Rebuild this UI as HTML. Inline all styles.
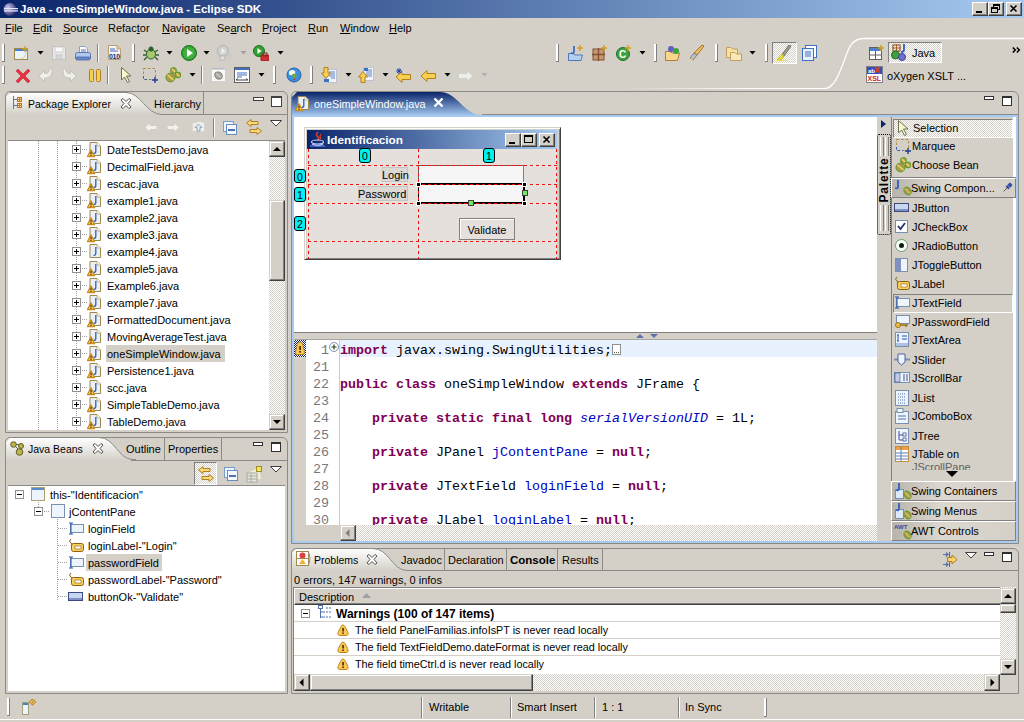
<!DOCTYPE html>
<html><head><meta charset="utf-8"><style>
html,body{margin:0;padding:0;}
body{width:1024px;height:722px;overflow:hidden;position:relative;background:#d4d0c8;font-family:"Liberation Sans",sans-serif;font-size:11px;color:#000;}
.a{position:absolute;}
.t{position:absolute;white-space:pre;}
u{text-decoration:underline;text-underline-offset:1px;}
</style></head><body>
<div class="a" style="left:0px;top:0px;width:1024px;height:18px;background:linear-gradient(to right,#0a246a,#a6caf0)"></div><svg class="a" style="left:2px;top:2px;" width="16" height="15" viewBox="0 0 16 15"><defs><radialGradient id="eg" cx="0.35" cy="0.35" r="0.7"><stop offset="0" stop-color="#c8c8f0"/><stop offset="1" stop-color="#2c2a6a"/></radialGradient></defs><circle cx="8" cy="7.5" r="6.5" fill="url(#eg)"/><rect x="2" y="6" width="14" height="1.2" fill="#e8e8ff"/><rect x="2" y="8.3" width="14" height="1.2" fill="#e8e8ff"/></svg><div class="t" style="left:20px;top:2px;line-height:14px;color:#fff;font-weight:bold;font-size:11.5px;">Java - oneSimpleWindow.java - Eclipse SDK</div><div class="a" style="left:972px;top:2px;width:16px;height:14px;background:#d4d0c8;border-top:1px solid #fff;border-left:1px solid #fff;border-right:1px solid #404040;border-bottom:1px solid #404040;box-sizing:border-box;box-shadow:inset -1px -1px 0 #808080"></div><svg class="a" style="left:972px;top:2px;" width="16" height="14" viewBox="0 0 16 14"><rect x="4" y="9" width="6" height="2" fill="#000"/></svg><div class="a" style="left:988px;top:2px;width:16px;height:14px;background:#d4d0c8;border-top:1px solid #fff;border-left:1px solid #fff;border-right:1px solid #404040;border-bottom:1px solid #404040;box-sizing:border-box;box-shadow:inset -1px -1px 0 #808080"></div><svg class="a" style="left:988px;top:2px;" width="16" height="14" viewBox="0 0 16 14"><rect x="5.5" y="2.5" width="6" height="5" fill="none" stroke="#000"/><rect x="5" y="2" width="7" height="2" fill="#000"/><rect x="3.5" y="5.5" width="6" height="5" fill="#d4d0c8" stroke="#000"/><rect x="3" y="5" width="7" height="2" fill="#000"/></svg><div class="a" style="left:1006px;top:2px;width:16px;height:14px;background:#d4d0c8;border-top:1px solid #fff;border-left:1px solid #fff;border-right:1px solid #404040;border-bottom:1px solid #404040;box-sizing:border-box;box-shadow:inset -1px -1px 0 #808080"></div><svg class="a" style="left:1006px;top:2px;" width="16" height="14" viewBox="0 0 16 14"><path d="M4.5 3.5 L10.5 9.5 M10.5 3.5 L4.5 9.5" stroke="#000" stroke-width="1.6"/></svg><div class="t" style="left:5px;top:22px;line-height:13px;font-size:11px"><u>F</u>ile</div><div class="t" style="left:33px;top:22px;line-height:13px;font-size:11px"><u>E</u>dit</div><div class="t" style="left:63px;top:22px;line-height:13px;font-size:11px"><u>S</u>ource</div><div class="t" style="left:108px;top:22px;line-height:13px;font-size:11px">Refac<u>t</u>or</div><div class="t" style="left:162px;top:22px;line-height:13px;font-size:11px"><u>N</u>avigate</div><div class="t" style="left:217px;top:22px;line-height:13px;font-size:11px">Se<u>a</u>rch</div><div class="t" style="left:262px;top:22px;line-height:13px;font-size:11px"><u>P</u>roject</div><div class="t" style="left:308px;top:22px;line-height:13px;font-size:11px"><u>R</u>un</div><div class="t" style="left:340px;top:22px;line-height:13px;font-size:11px"><u>W</u>indow</div><div class="t" style="left:389px;top:22px;line-height:13px;font-size:11px"><u>H</u>elp</div><div class="a" style="left:2px;top:44px;width:3px;height:18px;background:#fff;border-right:1px solid #808080;border-bottom:1px solid #808080;box-sizing:border-box;"></div><div class="a" style="left:2px;top:66px;width:3px;height:18px;background:#fff;border-right:1px solid #808080;border-bottom:1px solid #808080;box-sizing:border-box;"></div><svg class="a" style="left:14px;top:46px;" width="15" height="15" viewBox="0 0 15 15"><rect x="0.5" y="2.5" width="13" height="11" fill="#eaf2fb" stroke="#a08848"/><rect x="1" y="3" width="12" height="2" fill="#4a7fd0"/><path d="M11 0 V6 M8 3 H14" stroke="#d0a020" stroke-width="1.5"/><path d="M12 6 Q12 12 6 13" stroke="#f0d060" fill="none"/></svg><svg class="a" style="left:37px;top:51px;" width="7" height="4" viewBox="0 0 7 4"><path d="M0.5 0 H6.5 L3.5 3.5 Z" fill="#000"/></svg><svg class="a" style="left:52px;top:46px;" width="15" height="15" viewBox="0 0 15 15"><rect x="0.5" y="0.5" width="13" height="13" fill="#e8e8e8" stroke="#c0c0c0"/><rect x="3" y="1" width="8" height="5" fill="#fafafa" stroke="#d0d0d0"/><rect x="4" y="9" width="6" height="4" fill="#d8d8d8" stroke="#c8c8c8"/></svg><svg class="a" style="left:75px;top:46px;" width="16" height="15" viewBox="0 0 16 15"><path d="M4.5 0.5 H10 L12.5 3 V8.5 H4.5 Z" fill="#fff" stroke="#8aa0c8"/><path d="M6 4 H11 M6 6 H11" stroke="#5070b0"/><path d="M0.5 8.5 Q0.5 6.5 2.5 6.5 H13.5 Q15.5 6.5 15.5 8.5 V12.5 H0.5 Z" fill="#b0c8ec" stroke="#5a78b8"/><rect x="1" y="11" width="14" height="3" rx="1" fill="#6a88c8" stroke="#4a68a8" stroke-width="0.8"/></svg><div class="a" style="left:97px;top:44px;width:2px;height:18px;border-left:1px solid #808080;border-right:1px solid #fff;box-sizing:border-box;"></div><svg class="a" style="left:108px;top:45px;" width="15" height="16" viewBox="0 0 15 16"><path d="M0.5 0.5 H9 L12.5 4 V14.5 H0.5 Z" fill="#f2f4f8" stroke="#b8a070"/><path d="M9 0.5 V4 H12.5" fill="#f0c080" stroke="#c0a070"/><path d="M2 4 H7 M2 6 H10" stroke="#4a68b8"/><text x="1" y="13.5" font-family="Liberation Sans" font-size="7" font-weight="bold" fill="#102a6a" letter-spacing="-0.3">010</text></svg><div class="a" style="left:132px;top:44px;width:3px;height:18px;background:#fff;border-right:1px solid #808080;border-bottom:1px solid #808080;box-sizing:border-box;"></div><svg class="a" style="left:143px;top:45px;" width="16" height="16" viewBox="0 0 16 16"><ellipse cx="8" cy="9" rx="4.5" ry="5" fill="#a8c870" stroke="#306030"/><circle cx="8" cy="4" r="2.5" fill="#306030"/><path d="M1 5 L4 7 M15 5 L12 7 M0 10 H3 M16 10 H13 M1 15 L4 12 M15 15 L12 12" stroke="#306030" stroke-width="1.3"/></svg><svg class="a" style="left:166px;top:51px;" width="7" height="4" viewBox="0 0 7 4"><path d="M0.5 0 H6.5 L3.5 3.5 Z" fill="#000"/></svg><svg class="a" style="left:181px;top:45px;" width="16" height="16" viewBox="0 0 16 16"><circle cx="8" cy="8" r="7.5" fill="#30a030" stroke="#207020"/><circle cx="8" cy="8" r="6" fill="#40b040"/><path d="M6 4 L12 8 L6 12 Z" fill="#fff"/></svg><svg class="a" style="left:203px;top:51px;" width="7" height="4" viewBox="0 0 7 4"><path d="M0.5 0 H6.5 L3.5 3.5 Z" fill="#000"/></svg><svg class="a" style="left:217px;top:45px;" width="16" height="16" viewBox="0 0 16 16"><circle cx="6" cy="6" r="5.5" fill="#d0d0d0" stroke="#b0b0b0"/><path d="M4.5 3 L8.5 6 L4.5 9 Z" fill="#f0f0f0"/><path d="M10 10 H15 M10 12 H15 M10 14 H15" stroke="#c8c8c8"/><rect x="3" y="11" width="5" height="4" fill="#e0e0e0" stroke="#b8b8b8"/></svg><svg class="a" style="left:240px;top:51px;" width="7" height="4" viewBox="0 0 7 4"><path d="M0.5 0 H6.5 L3.5 3.5 Z" fill="#a0a0a0"/></svg><svg class="a" style="left:253px;top:45px;" width="16" height="16" viewBox="0 0 16 16"><circle cx="6" cy="6" r="5.5" fill="#30a030" stroke="#207020"/><path d="M4.5 3 L8.5 6 L4.5 9 Z" fill="#fff"/><rect x="8" y="10" width="8" height="6" rx="1" fill="#d03030" stroke="#902020"/><rect x="10" y="8" width="4" height="3" fill="none" stroke="#902020"/></svg><svg class="a" style="left:277px;top:51px;" width="7" height="4" viewBox="0 0 7 4"><path d="M0.5 0 H6.5 L3.5 3.5 Z" fill="#000"/></svg><div class="a" style="left:556px;top:44px;width:3px;height:18px;background:#fff;border-right:1px solid #808080;border-bottom:1px solid #808080;box-sizing:border-box;"></div><svg class="a" style="left:568px;top:45px;" width="16" height="16" viewBox="0 0 16 16"><path d="M0.5 8.5 H5 L7 10 H14.5 L13 15.5 H0.5 Z" fill="#b8d0f0" stroke="#5078b8"/><path d="M6 1 V7 Q6 9 3 8" stroke="#3060c0" stroke-width="1.6" fill="none"/><path d="M12 0 V6 M9 3 H15" stroke="#d0a020" stroke-width="1.5"/></svg><svg class="a" style="left:592px;top:45px;" width="16" height="16" viewBox="0 0 16 16"><rect x="1" y="4" width="11" height="11" fill="#c89870" stroke="#805030"/><path d="M6.5 3 V16 M0 9.5 H13" stroke="#805030" stroke-width="1.3"/><path d="M12 0 V6 M9 3 H15" stroke="#d0a020" stroke-width="1.5"/></svg><svg class="a" style="left:616px;top:45px;" width="16" height="16" viewBox="0 0 16 16"><circle cx="7" cy="9" r="6.5" fill="#40a040" stroke="#207020"/><text x="3" y="13" font-family="Liberation Sans" font-size="10" font-weight="bold" fill="#fff">C</text><path d="M12 0 V6 M9 3 H15" stroke="#d0a020" stroke-width="1.5"/></svg><svg class="a" style="left:639px;top:51px;" width="7" height="4" viewBox="0 0 7 4"><path d="M0.5 0 H6.5 L3.5 3.5 Z" fill="#000"/></svg><div class="a" style="left:654px;top:44px;width:3px;height:18px;background:#fff;border-right:1px solid #808080;border-bottom:1px solid #808080;box-sizing:border-box;"></div><svg class="a" style="left:665px;top:45px;" width="16" height="16" viewBox="0 0 16 16"><path d="M0.5 6.5 H5 L7 8 H14.5 L12.5 15.5 H0.5 Z" fill="#f8d890" stroke="#b08030"/><circle cx="6" cy="4" r="3" fill="#6060c0"/><circle cx="11" cy="6" r="3" fill="#40a040"/></svg><svg class="a" style="left:690px;top:45px;" width="16" height="16" viewBox="0 0 16 16"><path d="M14 1 L7 10 L4 8 L12 0 Z" fill="#f0c060" stroke="#a07020"/><path d="M4 8 L7 10 L3 15 L0 13 Z" fill="#c0c0c0" stroke="#808080"/><path d="M2 14 L0 16" stroke="#f0d080" stroke-width="2"/></svg><div class="a" style="left:715px;top:44px;width:3px;height:18px;background:#fff;border-right:1px solid #808080;border-bottom:1px solid #808080;box-sizing:border-box;"></div><svg class="a" style="left:726px;top:45px;" width="16" height="16" viewBox="0 0 16 16"><path d="M0.5 2.5 H5 L6.5 4 H11.5 V12.5 H0.5 Z" fill="#f8e0a0" stroke="#c0a060"/><path d="M4.5 7.5 H9 L10.5 9 H15.5 V15.5 H4.5 Z" fill="#f8e8b8" stroke="#c0a060"/></svg><svg class="a" style="left:749px;top:51px;" width="7" height="4" viewBox="0 0 7 4"><path d="M0.5 0 H6.5 L3.5 3.5 Z" fill="#000"/></svg><div class="a" style="left:765px;top:44px;width:3px;height:18px;background:#fff;border-right:1px solid #808080;border-bottom:1px solid #808080;box-sizing:border-box;"></div><div class="a" style="left:772px;top:42px;width:25px;height:22px;border:1px solid;border-color:#808080 #fff #fff #808080;box-sizing:border-box;background-color:#e8e6e2;background-image:repeating-conic-gradient(#fff 0 25%, #d4d0c8 0 50%);background-size:2px 2px;"></div><svg class="a" style="left:776px;top:45px;" width="17" height="16" viewBox="0 0 17 16"><path d="M15 1 L8 11 L6 9.5 L13 0 Z" fill="#a0a090" stroke="#707060"/><path d="M6 9.5 L8 11 L5 15 L1 15 Z" fill="#f0e040" stroke="#c0b020"/><path d="M0 15.5 H10" stroke="#f0e040"/></svg><svg class="a" style="left:802px;top:45px;" width="16" height="16" viewBox="0 0 16 16"><rect x="3.5" y="0.5" width="11" height="12" fill="#fff" stroke="#4070c0"/><rect x="0.5" y="3.5" width="11" height="12" fill="#e8f0ff" stroke="#4070c0"/><path d="M3 7 H9 M3 9 H9 M3 11 H9" stroke="#4070c0"/></svg><svg class="a" style="left:16px;top:68px;" width="16" height="16" viewBox="0 0 16 16"><path d="M2 1 L7 6 L12 1 L14 3 L9 8 L14 13 L12 15 L7 10 L2 15 L0 13 L5 8 L0 3 Z" fill="#e83040" stroke="#c02030" stroke-width="0.5"/></svg><svg class="a" style="left:38px;top:67px;" width="16" height="16" viewBox="0 0 16 16"><path d="M0.8 9 L6.5 3.5 V6.5 H8 Q11 6.5 11.5 1.5 L14 1 Q15 10.5 8.5 11 H6.5 V14.5 Z" fill="#efeee9" stroke="#c4c2bc" stroke-linejoin="round"/></svg><svg class="a" style="left:61px;top:67px;" width="16" height="16" viewBox="0 0 16 16"><path d="M15.2 9 L9.5 3.5 V6.5 H8 Q5 6.5 4.5 1.5 L2 1 Q1 10.5 7.5 11 H9.5 V14.5 Z" fill="#efeee9" stroke="#c4c2bc" stroke-linejoin="round"/></svg><svg class="a" style="left:88px;top:68px;" width="14" height="15" viewBox="0 0 14 15"><rect x="1.5" y="1.5" width="4" height="12" rx="1" fill="#f8d050" stroke="#b08020"/><rect x="8.5" y="1.5" width="4" height="12" rx="1" fill="#f8d050" stroke="#b08020"/></svg><div class="a" style="left:107px;top:66px;width:2px;height:18px;border-left:1px solid #808080;border-right:1px solid #fff;box-sizing:border-box;"></div><svg class="a" style="left:120px;top:67px;" width="12" height="16" viewBox="0 0 12 16"><path d="M1.5 0.5 V13 L4.5 10 L7.5 15.5 L9.5 14.5 L6.5 9 H11 Z" fill="#f8f8d0" stroke="#707050"/></svg><svg class="a" style="left:142px;top:67px;" width="16" height="16" viewBox="0 0 16 16"><rect x="1.5" y="1.5" width="12" height="11" fill="none" stroke="#b08840" stroke-dasharray="2.5 2"/><path d="M1.5 9 V12.5 H8" stroke="#3060b0" stroke-dasharray="2.5 2" fill="none"/><path d="M13 10 V16 M10 13 H16" stroke="#204090" stroke-width="1.4"/></svg><svg class="a" style="left:165px;top:67px;" width="16" height="16" viewBox="0 0 16 16"><g stroke="#5a9a20" stroke-width="1"><ellipse cx="5.5" cy="10.5" rx="4.6" ry="4.4" fill="#b09850"/><circle cx="8.5" cy="3.5" r="3" fill="#b09850"/><circle cx="13" cy="8" r="2.9" fill="#b09850"/></g><path d="M2.5 8 L8.5 13 M7 2 L10 5 M11.5 6.5 L14.5 9.5" stroke="#f0e070" stroke-width="1.1"/></svg><svg class="a" style="left:189px;top:73px;" width="7" height="4" viewBox="0 0 7 4"><path d="M0.5 0 H6.5 L3.5 3.5 Z" fill="#000"/></svg><div class="a" style="left:201px;top:66px;width:2px;height:18px;border-left:1px solid #808080;border-right:1px solid #fff;box-sizing:border-box;"></div><svg class="a" style="left:211px;top:67px;" width="16" height="16" viewBox="0 0 16 16"><rect x="0.5" y="0.5" width="14" height="14" fill="#f8f8f6" stroke="#d0d0cc"/><rect x="1" y="1" width="13" height="1.5" fill="#b8b8c0"/><ellipse cx="7.5" cy="8.5" rx="4" ry="3.3" transform="rotate(40 7.5 8.5)" fill="#a8a8a0" stroke="#808078"/><path d="M5 6.5 L10 10.5" stroke="#e0e0d8"/></svg><svg class="a" style="left:234px;top:67px;" width="16" height="16" viewBox="0 0 16 16"><rect x="0.5" y="0.5" width="15" height="15" fill="#fff" stroke="#606060"/><rect x="1" y="1" width="14" height="2" fill="#4070c0"/><path d="M3 6 H13 M3 8 H13 M3 10 H8" stroke="#4070c0"/><path d="M2 13 H14 M2 13 L4 11.5 M14 13 L12 11.5" stroke="#404040"/></svg><svg class="a" style="left:258px;top:73px;" width="7" height="4" viewBox="0 0 7 4"><path d="M0.5 0 H6.5 L3.5 3.5 Z" fill="#000"/></svg><div class="a" style="left:273px;top:66px;width:3px;height:18px;background:#fff;border-right:1px solid #808080;border-bottom:1px solid #808080;box-sizing:border-box;"></div><svg class="a" style="left:286px;top:67px;" width="16" height="16" viewBox="0 0 16 16"><circle cx="8" cy="8" r="7" fill="#3c8ee0" stroke="#2a60a8"/><path d="M3 4 Q6 2 9 4 Q10 7 7 8 Q4 9 3 7 Z" fill="#f4f8f0"/><path d="M6 7 Q9 6 11 8 Q10 11 8 12 Q6 10 6 7 Z" fill="#70a838"/><circle cx="8.5" cy="12.5" r="0.8" fill="#c02020"/></svg><div class="a" style="left:310px;top:66px;width:3px;height:18px;background:#fff;border-right:1px solid #808080;border-bottom:1px solid #808080;box-sizing:border-box;"></div><svg class="a" style="left:321px;top:67px;" width="16" height="16" viewBox="0 0 16 16"><rect x="5.5" y="2.5" width="10" height="13" fill="#f0f4fa" stroke="#b8c4d4"/><path d="M8 5 H14 M8 7 H14 M8 9 H14 M10 11 H14" stroke="#6080c0"/><rect x="3" y="12" width="5" height="3" fill="#4070c0"/><path d="M3 0.5 H7 V6 H9.5 L5 11.5 L0.5 6 H3 Z" fill="#f8d050" stroke="#b08020"/></svg><svg class="a" style="left:345px;top:73px;" width="7" height="4" viewBox="0 0 7 4"><path d="M0.5 0 H6.5 L3.5 3.5 Z" fill="#000"/></svg><svg class="a" style="left:358px;top:67px;" width="16" height="16" viewBox="0 0 16 16"><rect x="5.5" y="0.5" width="10" height="13" fill="#f0f4fa" stroke="#b8c4d4"/><path d="M10 3 H14 M8 5 H14 M8 7 H14 M8 9 H14" stroke="#6080c0"/><rect x="6" y="1" width="4" height="3" fill="#4070c0"/><path d="M3 15.5 H7 V10 H9.5 L5 4.5 L0.5 10 H3 Z" fill="#f8d050" stroke="#b08020"/></svg><svg class="a" style="left:382px;top:73px;" width="7" height="4" viewBox="0 0 7 4"><path d="M0.5 0 H6.5 L3.5 3.5 Z" fill="#000"/></svg><svg class="a" style="left:395px;top:68px;" width="16" height="16" viewBox="0 0 16 16"><path d="M1 9 L7 3.5 V6.5 H15.5 V11.5 H7 V14.5 Z" fill="#f8d050" stroke="#b08020"/><path d="M2 1 L6 5 M6 1 L2 5 M4 0 V6 M1 3 H7" stroke="#2040a0"/></svg><svg class="a" style="left:420px;top:68px;" width="16" height="16" viewBox="0 0 16 16"><path d="M1 8 L7 2.5 V5.5 H15.5 V10.5 H7 V13.5 Z" fill="#f8d050" stroke="#b08020"/></svg><svg class="a" style="left:444px;top:73px;" width="7" height="4" viewBox="0 0 7 4"><path d="M0.5 0 H6.5 L3.5 3.5 Z" fill="#000"/></svg><svg class="a" style="left:458px;top:68px;" width="16" height="16" viewBox="0 0 16 16"><path d="M15 8 L9 2.5 V5.5 H0.5 V10.5 H9 V13.5 Z" fill="#ecece8" stroke="#d0d0cc"/></svg><svg class="a" style="left:481px;top:73px;" width="7" height="4" viewBox="0 0 7 4"><path d="M0.5 0 H6.5 L3.5 3.5 Z" fill="#b0b0b0"/></svg><svg class="a" style="left:600px;top:30px;" width="424" height="62" viewBox="0 0 424 62"><defs><linearGradient id="pg" gradientUnits="userSpaceOnUse" x1="20" y1="0" x2="226" y2="0"><stop offset="0" stop-color="#fff" stop-opacity="0"/><stop offset="0.6" stop-color="#fff" stop-opacity="0.9"/><stop offset="1" stop-color="#fff" stop-opacity="1"/></linearGradient></defs><path d="M20 58.5 H226" stroke="url(#pg)" stroke-width="1"/><path d="M225 58.5 C 234 58.5, 240 42, 244 31 C 249 17, 252 8.5, 264 8.5 H424" fill="none" stroke="#fff" stroke-width="1.3"/></svg><svg class="a" style="left:869px;top:45px;" width="16" height="16" viewBox="0 0 16 16"><rect x="0.5" y="2.5" width="12" height="12" fill="#fff" stroke="#606060"/><rect x="1" y="3" width="11" height="3" fill="#5080c8"/><path d="M6.5 6 V14 M1 10 H12" stroke="#606060"/><path d="M12 0 V6 M9 3 H15" stroke="#d0a020" stroke-width="1.5"/></svg><div class="a" style="left:888px;top:42px;width:54px;height:21px;border:1px solid;border-color:#808080 #fff #fff #808080;box-sizing:border-box;background-color:#e8e6e2;background-image:repeating-conic-gradient(#fff 0 25%, #d4d0c8 0 50%);background-size:2px 2px;"></div><svg class="a" style="left:891px;top:44px;" width="17" height="17" viewBox="0 0 17 17"><rect x="2" y="1" width="7" height="6" fill="none" stroke="#a06030" stroke-width="1.2"/><path d="M5.5 0 V8 M1 4 H10" stroke="#a06030"/><path d="M13 0 V6 Q13 8 10 8" stroke="#3060c0" stroke-width="1.8" fill="none"/><circle cx="4.5" cy="11" r="4" fill="#40a040" stroke="#207020"/><circle cx="11" cy="13" r="3.5" fill="#7070c8" stroke="#4040a0"/></svg><div class="t" style="left:912px;top:47px;line-height:13px;font-size:11px">Java</div><svg class="a" style="left:866px;top:66px;" width="18" height="17" viewBox="0 0 18 17"><rect x="0.5" y="0.5" width="16" height="16" fill="#fff" stroke="#808080"/><rect x="1" y="1" width="15" height="7" fill="#3050c0"/><text x="2" y="6.5" font-family="Liberation Sans" font-size="6" font-weight="bold" fill="#fff">ab</text><path d="M9 1 L14 7 M14 1 L9 7" stroke="#e04020" stroke-width="1.5"/><text x="1.5" y="15" font-family="Liberation Sans" font-size="7" font-weight="bold" fill="#d02020">XSL</text></svg><div class="t" style="left:887px;top:70px;line-height:13px;font-size:11px">oXygen XSLT ...</div><svg class="a" style="left:1012px;top:47px;" width="9" height="6" viewBox="0 0 9 6"><path d="M0.8 0.5 L3.3 3 L0.8 5.5 M4.8 0.5 L7.3 3 L4.8 5.5" stroke="#000" stroke-width="1.5" fill="none"/></svg><div class="a" style="left:5px;top:91px;width:283px;height:342px;border:1px solid #8c8a87;border-top-left-radius:5px;border-top-right-radius:6px;box-sizing:border-box;"></div><svg class="a" style="left:6px;top:92px;" width="160" height="23" viewBox="0 0 160 23"><defs><linearGradient id="tg" x1="0" y1="0" x2="0" y2="1"><stop offset="0" stop-color="#fff"/><stop offset="1" stop-color="#d4d0c8"/></linearGradient></defs><path d="M0 23 V5 L4.5 0.5 H120 C 135 0.5, 140 22.5, 156 22.5 H160 V23 Z" fill="url(#tg)"/><path d="M120 0.5 C 135 0.5, 140 22.5, 156 22.5 H160" fill="none" stroke="#8c8a87"/></svg><div class="a" style="left:10px;top:92px;width:118px;height:1px;background:#8c8a87"></div><div class="a" style="left:161px;top:114px;width:126px;height:1px;background:#8c8a87"></div><div class="a" style="left:203px;top:92px;width:1px;height:22px;background:#8c8a87"></div><svg class="a" style="left:12px;top:96px;" width="12" height="14" viewBox="0 0 12 14"><path d="M1.5 0 V13 M1.5 3.5 H5 M1.5 9.5 H5" stroke="#5a7ab0"/><rect x="5" y="1" width="5" height="5" fill="#c07020"/><rect x="5" y="7" width="5" height="5" fill="#c07020"/><path d="M6.5 2.5 h0.01 M8.5 2.5 h0.01 M6.5 4.5 h0.01 M8.5 4.5 h0.01 M6.5 8.5 h0.01 M8.5 8.5 h0.01 M6.5 10.5 h0.01 M8.5 10.5 h0.01" stroke="#ffe8a0" stroke-width="1.1" stroke-linecap="square"/></svg><div class="t" style="left:28px;top:98px;line-height:13px;font-size:10.5px">Package Explorer</div><svg class="a" style="left:120px;top:98px;" width="12" height="11" viewBox="0 0 12 11"><path d="M1 2 L3 0.5 L6 3.5 L9 0.5 L11 2 L8 5.5 L11 9 L9 10.5 L6 7.5 L3 10.5 L1 9 L4 5.5 Z" fill="#fff" stroke="#505050"/></svg><div class="t" style="left:154px;top:98px;line-height:13px;font-size:11px">Hierarchy</div><div class="a" style="left:253px;top:97px;width:11px;height:4px;border:1px solid #404040;background:#fff;box-sizing:border-box;"></div><div class="a" style="left:271px;top:96px;width:11px;height:11px;border:1px solid #404040;border-top-width:2px;background:#fff;box-sizing:border-box;"></div><svg class="a" style="left:144px;top:121px;" width="14" height="13" viewBox="0 0 14 13"><path d="M0.8 6.5 L6 1.5 V4.5 H13 V8.5 H6 V11.5 Z" fill="#f2f1ec" stroke="#cfcdc6" stroke-linejoin="round"/></svg><svg class="a" style="left:166px;top:121px;" width="14" height="13" viewBox="0 0 14 13"><path d="M13.2 6.5 L8 1.5 V4.5 H1 V8.5 H8 V11.5 Z" fill="#f2f1ec" stroke="#cfcdc6" stroke-linejoin="round"/></svg><svg class="a" style="left:192px;top:120px;" width="14" height="14" viewBox="0 0 14 14"><path d="M0.5 2.5 H5 L6 1.5 H9 L10 2.5 H12.5 V11.5 H0.5 Z" fill="#f0efea" stroke="#d8d6d0"/><path d="M6.5 4 L10 7.5 H8 V11 H5 V7.5 H3 Z" fill="#e0e6ee" stroke="#98a8bc"/></svg><div class="a" style="left:213px;top:118px;width:1px;height:19px;background:#808080;border-right:1px solid #fff"></div><svg class="a" style="left:223px;top:121px;" width="15" height="15" viewBox="0 0 15 15"><rect x="0.5" y="0.5" width="10" height="10" fill="#eef4fb" stroke="#7a9cc8"/><rect x="3.5" y="3.5" width="10" height="10" fill="#f4f8fd" stroke="#6a8cc0"/><path d="M5 9 H12" stroke="#2050a0" stroke-width="1.6"/></svg><svg class="a" style="left:246px;top:119px;" width="16" height="16" viewBox="0 0 16 16"><path d="M0.5 4 L5 0.5 V2.5 H12 V5.5 H5 V7.5 Z" fill="#f8d878" stroke="#b08020"/><path d="M15.5 12 L11 8.5 V10.5 H4 V13.5 H11 V15.5 Z" fill="#f8d878" stroke="#b08020"/></svg><svg class="a" style="left:270px;top:120px;" width="12" height="7" viewBox="0 0 12 7"><path d="M0.5 0.5 H11.5 L6 6 Z" fill="#fff" stroke="#404040"/></svg><div class="a" style="left:8px;top:140px;width:277px;height:290px;background:#fff;border-top:1px solid #8c8a87;box-sizing:border-box"></div><div class="a" style="left:38px;top:141px;width:1px;height:289px;background:repeating-linear-gradient(to bottom,#a0a0a0 0 1px,transparent 1px 2px)"></div><div class="a" style="left:57px;top:141px;width:1px;height:289px;background:repeating-linear-gradient(to bottom,#a0a0a0 0 1px,transparent 1px 2px)"></div><div class="a" style="left:76px;top:141px;width:1px;height:289px;background:repeating-linear-gradient(to bottom,#a0a0a0 0 1px,transparent 1px 2px)"></div><div class="a" style="left:72px;top:145px;width:9px;height:9px;background:#fff;border:1px solid #909090;box-sizing:border-box"></div><svg class="a" style="left:72px;top:145px;" width="9" height="9" viewBox="0 0 9 9"><path d="M2 4.5 H7 M4.5 2 V7" stroke="#000"/></svg><div class="a" style="left:82px;top:149px;width:5px;height:1px;background:repeating-linear-gradient(to right,#a0a0a0 0 1px,transparent 1px 2px)"></div><svg class="a" style="left:87px;top:142px;" width="14" height="16" viewBox="0 0 14 16"><path d="M3 0.5 H10 L13.5 4 V13.5 H3 Z" fill="#eaf0fa" stroke="#a08848"/><path d="M10 0.5 V4 H13.5" fill="#fff" stroke="#c8b078"/><path d="M8.8 3 V9.5 Q8.8 11.5 6.5 11.5" stroke="#2f60b0" stroke-width="1.3" fill="none"/><g transform="translate(0,7)"><path d="M4 0.8 L7.6 7.6 H0.4 Z" fill="#f8c850" stroke="#c88a20" stroke-width="1.2" stroke-linejoin="round"/><rect x="3.5" y="3" width="1" height="2.5" fill="#301800"/><rect x="3.5" y="6" width="1" height="1" fill="#301800"/></g></svg><div class="t" style="left:107px;top:144px;line-height:13px;font-size:11px">DateTestsDemo.java</div><div class="a" style="left:72px;top:162px;width:9px;height:9px;background:#fff;border:1px solid #909090;box-sizing:border-box"></div><svg class="a" style="left:72px;top:162px;" width="9" height="9" viewBox="0 0 9 9"><path d="M2 4.5 H7 M4.5 2 V7" stroke="#000"/></svg><div class="a" style="left:82px;top:166px;width:5px;height:1px;background:repeating-linear-gradient(to right,#a0a0a0 0 1px,transparent 1px 2px)"></div><svg class="a" style="left:87px;top:159px;" width="14" height="16" viewBox="0 0 14 16"><path d="M3 0.5 H10 L13.5 4 V13.5 H3 Z" fill="#eaf0fa" stroke="#a08848"/><path d="M10 0.5 V4 H13.5" fill="#fff" stroke="#c8b078"/><path d="M8.8 3 V9.5 Q8.8 11.5 6.5 11.5" stroke="#2f60b0" stroke-width="1.3" fill="none"/><g transform="translate(0,7)"><path d="M4 0.8 L7.6 7.6 H0.4 Z" fill="#f8c850" stroke="#c88a20" stroke-width="1.2" stroke-linejoin="round"/><rect x="3.5" y="3" width="1" height="2.5" fill="#301800"/><rect x="3.5" y="6" width="1" height="1" fill="#301800"/></g></svg><div class="t" style="left:107px;top:161px;line-height:13px;font-size:11px">DecimalField.java</div><div class="a" style="left:72px;top:179px;width:9px;height:9px;background:#fff;border:1px solid #909090;box-sizing:border-box"></div><svg class="a" style="left:72px;top:179px;" width="9" height="9" viewBox="0 0 9 9"><path d="M2 4.5 H7 M4.5 2 V7" stroke="#000"/></svg><div class="a" style="left:82px;top:183px;width:5px;height:1px;background:repeating-linear-gradient(to right,#a0a0a0 0 1px,transparent 1px 2px)"></div><svg class="a" style="left:87px;top:176px;" width="14" height="16" viewBox="0 0 14 16"><path d="M3 0.5 H10 L13.5 4 V13.5 H3 Z" fill="#eaf0fa" stroke="#a08848"/><path d="M10 0.5 V4 H13.5" fill="#fff" stroke="#c8b078"/><path d="M8.8 3 V9.5 Q8.8 11.5 6.5 11.5" stroke="#2f60b0" stroke-width="1.3" fill="none"/><g transform="translate(0,7)"><path d="M4 0.8 L7.6 7.6 H0.4 Z" fill="#f8c850" stroke="#c88a20" stroke-width="1.2" stroke-linejoin="round"/><rect x="3.5" y="3" width="1" height="2.5" fill="#301800"/><rect x="3.5" y="6" width="1" height="1" fill="#301800"/></g></svg><div class="t" style="left:107px;top:178px;line-height:13px;font-size:11px">escac.java</div><div class="a" style="left:72px;top:196px;width:9px;height:9px;background:#fff;border:1px solid #909090;box-sizing:border-box"></div><svg class="a" style="left:72px;top:196px;" width="9" height="9" viewBox="0 0 9 9"><path d="M2 4.5 H7 M4.5 2 V7" stroke="#000"/></svg><div class="a" style="left:82px;top:200px;width:5px;height:1px;background:repeating-linear-gradient(to right,#a0a0a0 0 1px,transparent 1px 2px)"></div><svg class="a" style="left:87px;top:193px;" width="14" height="16" viewBox="0 0 14 16"><path d="M3 0.5 H10 L13.5 4 V13.5 H3 Z" fill="#eaf0fa" stroke="#a08848"/><path d="M10 0.5 V4 H13.5" fill="#fff" stroke="#c8b078"/><path d="M8.8 3 V9.5 Q8.8 11.5 6.5 11.5" stroke="#2f60b0" stroke-width="1.3" fill="none"/><g transform="translate(0,7)"><path d="M4 0.8 L7.6 7.6 H0.4 Z" fill="#f8c850" stroke="#c88a20" stroke-width="1.2" stroke-linejoin="round"/><rect x="3.5" y="3" width="1" height="2.5" fill="#301800"/><rect x="3.5" y="6" width="1" height="1" fill="#301800"/></g></svg><div class="t" style="left:107px;top:195px;line-height:13px;font-size:11px">example1.java</div><div class="a" style="left:72px;top:213px;width:9px;height:9px;background:#fff;border:1px solid #909090;box-sizing:border-box"></div><svg class="a" style="left:72px;top:213px;" width="9" height="9" viewBox="0 0 9 9"><path d="M2 4.5 H7 M4.5 2 V7" stroke="#000"/></svg><div class="a" style="left:82px;top:217px;width:5px;height:1px;background:repeating-linear-gradient(to right,#a0a0a0 0 1px,transparent 1px 2px)"></div><svg class="a" style="left:87px;top:210px;" width="14" height="16" viewBox="0 0 14 16"><path d="M3 0.5 H10 L13.5 4 V13.5 H3 Z" fill="#eaf0fa" stroke="#a08848"/><path d="M10 0.5 V4 H13.5" fill="#fff" stroke="#c8b078"/><path d="M8.8 3 V9.5 Q8.8 11.5 6.5 11.5" stroke="#2f60b0" stroke-width="1.3" fill="none"/><g transform="translate(0,7)"><path d="M4 0.8 L7.6 7.6 H0.4 Z" fill="#f8c850" stroke="#c88a20" stroke-width="1.2" stroke-linejoin="round"/><rect x="3.5" y="3" width="1" height="2.5" fill="#301800"/><rect x="3.5" y="6" width="1" height="1" fill="#301800"/></g></svg><div class="t" style="left:107px;top:212px;line-height:13px;font-size:11px">example2.java</div><div class="a" style="left:72px;top:230px;width:9px;height:9px;background:#fff;border:1px solid #909090;box-sizing:border-box"></div><svg class="a" style="left:72px;top:230px;" width="9" height="9" viewBox="0 0 9 9"><path d="M2 4.5 H7 M4.5 2 V7" stroke="#000"/></svg><div class="a" style="left:82px;top:234px;width:5px;height:1px;background:repeating-linear-gradient(to right,#a0a0a0 0 1px,transparent 1px 2px)"></div><svg class="a" style="left:87px;top:227px;" width="14" height="16" viewBox="0 0 14 16"><path d="M3 0.5 H10 L13.5 4 V13.5 H3 Z" fill="#eaf0fa" stroke="#a08848"/><path d="M10 0.5 V4 H13.5" fill="#fff" stroke="#c8b078"/><path d="M8.8 3 V9.5 Q8.8 11.5 6.5 11.5" stroke="#2f60b0" stroke-width="1.3" fill="none"/><g transform="translate(0,7)"><path d="M4 0.8 L7.6 7.6 H0.4 Z" fill="#f8c850" stroke="#c88a20" stroke-width="1.2" stroke-linejoin="round"/><rect x="3.5" y="3" width="1" height="2.5" fill="#301800"/><rect x="3.5" y="6" width="1" height="1" fill="#301800"/></g></svg><div class="t" style="left:107px;top:229px;line-height:13px;font-size:11px">example3.java</div><div class="a" style="left:72px;top:247px;width:9px;height:9px;background:#fff;border:1px solid #909090;box-sizing:border-box"></div><svg class="a" style="left:72px;top:247px;" width="9" height="9" viewBox="0 0 9 9"><path d="M2 4.5 H7 M4.5 2 V7" stroke="#000"/></svg><div class="a" style="left:82px;top:251px;width:5px;height:1px;background:repeating-linear-gradient(to right,#a0a0a0 0 1px,transparent 1px 2px)"></div><svg class="a" style="left:87px;top:244px;" width="14" height="16" viewBox="0 0 14 16"><path d="M3 0.5 H10 L13.5 4 V13.5 H3 Z" fill="#eaf0fa" stroke="#a08848"/><path d="M10 0.5 V4 H13.5" fill="#fff" stroke="#c8b078"/><path d="M8.8 3 V9.5 Q8.8 11.5 6.5 11.5" stroke="#2f60b0" stroke-width="1.3" fill="none"/></svg><div class="t" style="left:107px;top:246px;line-height:13px;font-size:11px">example4.java</div><div class="a" style="left:72px;top:264px;width:9px;height:9px;background:#fff;border:1px solid #909090;box-sizing:border-box"></div><svg class="a" style="left:72px;top:264px;" width="9" height="9" viewBox="0 0 9 9"><path d="M2 4.5 H7 M4.5 2 V7" stroke="#000"/></svg><div class="a" style="left:82px;top:268px;width:5px;height:1px;background:repeating-linear-gradient(to right,#a0a0a0 0 1px,transparent 1px 2px)"></div><svg class="a" style="left:87px;top:261px;" width="14" height="16" viewBox="0 0 14 16"><path d="M3 0.5 H10 L13.5 4 V13.5 H3 Z" fill="#eaf0fa" stroke="#a08848"/><path d="M10 0.5 V4 H13.5" fill="#fff" stroke="#c8b078"/><path d="M8.8 3 V9.5 Q8.8 11.5 6.5 11.5" stroke="#2f60b0" stroke-width="1.3" fill="none"/><g transform="translate(0,7)"><path d="M4 0.8 L7.6 7.6 H0.4 Z" fill="#f8c850" stroke="#c88a20" stroke-width="1.2" stroke-linejoin="round"/><rect x="3.5" y="3" width="1" height="2.5" fill="#301800"/><rect x="3.5" y="6" width="1" height="1" fill="#301800"/></g></svg><div class="t" style="left:107px;top:263px;line-height:13px;font-size:11px">example5.java</div><div class="a" style="left:72px;top:281px;width:9px;height:9px;background:#fff;border:1px solid #909090;box-sizing:border-box"></div><svg class="a" style="left:72px;top:281px;" width="9" height="9" viewBox="0 0 9 9"><path d="M2 4.5 H7 M4.5 2 V7" stroke="#000"/></svg><div class="a" style="left:82px;top:285px;width:5px;height:1px;background:repeating-linear-gradient(to right,#a0a0a0 0 1px,transparent 1px 2px)"></div><svg class="a" style="left:87px;top:278px;" width="14" height="16" viewBox="0 0 14 16"><path d="M3 0.5 H10 L13.5 4 V13.5 H3 Z" fill="#eaf0fa" stroke="#a08848"/><path d="M10 0.5 V4 H13.5" fill="#fff" stroke="#c8b078"/><path d="M8.8 3 V9.5 Q8.8 11.5 6.5 11.5" stroke="#2f60b0" stroke-width="1.3" fill="none"/><g transform="translate(0,7)"><path d="M4 0.8 L7.6 7.6 H0.4 Z" fill="#f8c850" stroke="#c88a20" stroke-width="1.2" stroke-linejoin="round"/><rect x="3.5" y="3" width="1" height="2.5" fill="#301800"/><rect x="3.5" y="6" width="1" height="1" fill="#301800"/></g></svg><div class="t" style="left:107px;top:280px;line-height:13px;font-size:11px">Example6.java</div><div class="a" style="left:72px;top:298px;width:9px;height:9px;background:#fff;border:1px solid #909090;box-sizing:border-box"></div><svg class="a" style="left:72px;top:298px;" width="9" height="9" viewBox="0 0 9 9"><path d="M2 4.5 H7 M4.5 2 V7" stroke="#000"/></svg><div class="a" style="left:82px;top:302px;width:5px;height:1px;background:repeating-linear-gradient(to right,#a0a0a0 0 1px,transparent 1px 2px)"></div><svg class="a" style="left:87px;top:295px;" width="14" height="16" viewBox="0 0 14 16"><path d="M3 0.5 H10 L13.5 4 V13.5 H3 Z" fill="#eaf0fa" stroke="#a08848"/><path d="M10 0.5 V4 H13.5" fill="#fff" stroke="#c8b078"/><path d="M8.8 3 V9.5 Q8.8 11.5 6.5 11.5" stroke="#2f60b0" stroke-width="1.3" fill="none"/><g transform="translate(0,7)"><path d="M4 0.8 L7.6 7.6 H0.4 Z" fill="#f8c850" stroke="#c88a20" stroke-width="1.2" stroke-linejoin="round"/><rect x="3.5" y="3" width="1" height="2.5" fill="#301800"/><rect x="3.5" y="6" width="1" height="1" fill="#301800"/></g></svg><div class="t" style="left:107px;top:297px;line-height:13px;font-size:11px">example7.java</div><div class="a" style="left:72px;top:315px;width:9px;height:9px;background:#fff;border:1px solid #909090;box-sizing:border-box"></div><svg class="a" style="left:72px;top:315px;" width="9" height="9" viewBox="0 0 9 9"><path d="M2 4.5 H7 M4.5 2 V7" stroke="#000"/></svg><div class="a" style="left:82px;top:319px;width:5px;height:1px;background:repeating-linear-gradient(to right,#a0a0a0 0 1px,transparent 1px 2px)"></div><svg class="a" style="left:87px;top:312px;" width="14" height="16" viewBox="0 0 14 16"><path d="M3 0.5 H10 L13.5 4 V13.5 H3 Z" fill="#eaf0fa" stroke="#a08848"/><path d="M10 0.5 V4 H13.5" fill="#fff" stroke="#c8b078"/><path d="M8.8 3 V9.5 Q8.8 11.5 6.5 11.5" stroke="#2f60b0" stroke-width="1.3" fill="none"/><g transform="translate(0,7)"><path d="M4 0.8 L7.6 7.6 H0.4 Z" fill="#f8c850" stroke="#c88a20" stroke-width="1.2" stroke-linejoin="round"/><rect x="3.5" y="3" width="1" height="2.5" fill="#301800"/><rect x="3.5" y="6" width="1" height="1" fill="#301800"/></g></svg><div class="t" style="left:107px;top:314px;line-height:13px;font-size:11px">FormattedDocument.java</div><div class="a" style="left:72px;top:332px;width:9px;height:9px;background:#fff;border:1px solid #909090;box-sizing:border-box"></div><svg class="a" style="left:72px;top:332px;" width="9" height="9" viewBox="0 0 9 9"><path d="M2 4.5 H7 M4.5 2 V7" stroke="#000"/></svg><div class="a" style="left:82px;top:336px;width:5px;height:1px;background:repeating-linear-gradient(to right,#a0a0a0 0 1px,transparent 1px 2px)"></div><svg class="a" style="left:87px;top:329px;" width="14" height="16" viewBox="0 0 14 16"><path d="M3 0.5 H10 L13.5 4 V13.5 H3 Z" fill="#eaf0fa" stroke="#a08848"/><path d="M10 0.5 V4 H13.5" fill="#fff" stroke="#c8b078"/><path d="M8.8 3 V9.5 Q8.8 11.5 6.5 11.5" stroke="#2f60b0" stroke-width="1.3" fill="none"/><g transform="translate(0,7)"><path d="M4 0.8 L7.6 7.6 H0.4 Z" fill="#f8c850" stroke="#c88a20" stroke-width="1.2" stroke-linejoin="round"/><rect x="3.5" y="3" width="1" height="2.5" fill="#301800"/><rect x="3.5" y="6" width="1" height="1" fill="#301800"/></g></svg><div class="t" style="left:107px;top:331px;line-height:13px;font-size:11px">MovingAverageTest.java</div><div class="a" style="left:106px;top:345px;width:119px;height:17px;background:#d4d0c8"></div><div class="a" style="left:72px;top:349px;width:9px;height:9px;background:#fff;border:1px solid #909090;box-sizing:border-box"></div><svg class="a" style="left:72px;top:349px;" width="9" height="9" viewBox="0 0 9 9"><path d="M2 4.5 H7 M4.5 2 V7" stroke="#000"/></svg><div class="a" style="left:82px;top:353px;width:5px;height:1px;background:repeating-linear-gradient(to right,#a0a0a0 0 1px,transparent 1px 2px)"></div><svg class="a" style="left:87px;top:346px;" width="14" height="16" viewBox="0 0 14 16"><path d="M3 0.5 H10 L13.5 4 V13.5 H3 Z" fill="#eaf0fa" stroke="#a08848"/><path d="M10 0.5 V4 H13.5" fill="#fff" stroke="#c8b078"/><path d="M8.8 3 V9.5 Q8.8 11.5 6.5 11.5" stroke="#2f60b0" stroke-width="1.3" fill="none"/><g transform="translate(0,7)"><path d="M4 0.8 L7.6 7.6 H0.4 Z" fill="#f8c850" stroke="#c88a20" stroke-width="1.2" stroke-linejoin="round"/><rect x="3.5" y="3" width="1" height="2.5" fill="#301800"/><rect x="3.5" y="6" width="1" height="1" fill="#301800"/></g></svg><div class="t" style="left:107px;top:348px;line-height:13px;font-size:11px">oneSimpleWindow.java</div><div class="a" style="left:72px;top:366px;width:9px;height:9px;background:#fff;border:1px solid #909090;box-sizing:border-box"></div><svg class="a" style="left:72px;top:366px;" width="9" height="9" viewBox="0 0 9 9"><path d="M2 4.5 H7 M4.5 2 V7" stroke="#000"/></svg><div class="a" style="left:82px;top:370px;width:5px;height:1px;background:repeating-linear-gradient(to right,#a0a0a0 0 1px,transparent 1px 2px)"></div><svg class="a" style="left:87px;top:363px;" width="14" height="16" viewBox="0 0 14 16"><path d="M3 0.5 H10 L13.5 4 V13.5 H3 Z" fill="#eaf0fa" stroke="#a08848"/><path d="M10 0.5 V4 H13.5" fill="#fff" stroke="#c8b078"/><path d="M8.8 3 V9.5 Q8.8 11.5 6.5 11.5" stroke="#2f60b0" stroke-width="1.3" fill="none"/><g transform="translate(0,7)"><path d="M4 0.8 L7.6 7.6 H0.4 Z" fill="#f8c850" stroke="#c88a20" stroke-width="1.2" stroke-linejoin="round"/><rect x="3.5" y="3" width="1" height="2.5" fill="#301800"/><rect x="3.5" y="6" width="1" height="1" fill="#301800"/></g></svg><div class="t" style="left:107px;top:365px;line-height:13px;font-size:11px">Persistence1.java</div><div class="a" style="left:72px;top:383px;width:9px;height:9px;background:#fff;border:1px solid #909090;box-sizing:border-box"></div><svg class="a" style="left:72px;top:383px;" width="9" height="9" viewBox="0 0 9 9"><path d="M2 4.5 H7 M4.5 2 V7" stroke="#000"/></svg><div class="a" style="left:82px;top:387px;width:5px;height:1px;background:repeating-linear-gradient(to right,#a0a0a0 0 1px,transparent 1px 2px)"></div><svg class="a" style="left:87px;top:380px;" width="14" height="16" viewBox="0 0 14 16"><path d="M3 0.5 H10 L13.5 4 V13.5 H3 Z" fill="#eaf0fa" stroke="#a08848"/><path d="M10 0.5 V4 H13.5" fill="#fff" stroke="#c8b078"/><path d="M8.8 3 V9.5 Q8.8 11.5 6.5 11.5" stroke="#2f60b0" stroke-width="1.3" fill="none"/><g transform="translate(0,7)"><path d="M4 0.8 L7.6 7.6 H0.4 Z" fill="#f8c850" stroke="#c88a20" stroke-width="1.2" stroke-linejoin="round"/><rect x="3.5" y="3" width="1" height="2.5" fill="#301800"/><rect x="3.5" y="6" width="1" height="1" fill="#301800"/></g></svg><div class="t" style="left:107px;top:382px;line-height:13px;font-size:11px">scc.java</div><div class="a" style="left:72px;top:400px;width:9px;height:9px;background:#fff;border:1px solid #909090;box-sizing:border-box"></div><svg class="a" style="left:72px;top:400px;" width="9" height="9" viewBox="0 0 9 9"><path d="M2 4.5 H7 M4.5 2 V7" stroke="#000"/></svg><div class="a" style="left:82px;top:404px;width:5px;height:1px;background:repeating-linear-gradient(to right,#a0a0a0 0 1px,transparent 1px 2px)"></div><svg class="a" style="left:87px;top:397px;" width="14" height="16" viewBox="0 0 14 16"><path d="M3 0.5 H10 L13.5 4 V13.5 H3 Z" fill="#eaf0fa" stroke="#a08848"/><path d="M10 0.5 V4 H13.5" fill="#fff" stroke="#c8b078"/><path d="M8.8 3 V9.5 Q8.8 11.5 6.5 11.5" stroke="#2f60b0" stroke-width="1.3" fill="none"/><g transform="translate(0,7)"><path d="M4 0.8 L7.6 7.6 H0.4 Z" fill="#f8c850" stroke="#c88a20" stroke-width="1.2" stroke-linejoin="round"/><rect x="3.5" y="3" width="1" height="2.5" fill="#301800"/><rect x="3.5" y="6" width="1" height="1" fill="#301800"/></g></svg><div class="t" style="left:107px;top:399px;line-height:13px;font-size:11px">SimpleTableDemo.java</div><div class="a" style="left:72px;top:417px;width:9px;height:9px;background:#fff;border:1px solid #909090;box-sizing:border-box"></div><svg class="a" style="left:72px;top:417px;" width="9" height="9" viewBox="0 0 9 9"><path d="M2 4.5 H7 M4.5 2 V7" stroke="#000"/></svg><div class="a" style="left:82px;top:421px;width:5px;height:1px;background:repeating-linear-gradient(to right,#a0a0a0 0 1px,transparent 1px 2px)"></div><svg class="a" style="left:87px;top:414px;" width="14" height="16" viewBox="0 0 14 16"><path d="M3 0.5 H10 L13.5 4 V13.5 H3 Z" fill="#eaf0fa" stroke="#a08848"/><path d="M10 0.5 V4 H13.5" fill="#fff" stroke="#c8b078"/><path d="M8.8 3 V9.5 Q8.8 11.5 6.5 11.5" stroke="#2f60b0" stroke-width="1.3" fill="none"/><g transform="translate(0,7)"><path d="M4 0.8 L7.6 7.6 H0.4 Z" fill="#f8c850" stroke="#c88a20" stroke-width="1.2" stroke-linejoin="round"/><rect x="3.5" y="3" width="1" height="2.5" fill="#301800"/><rect x="3.5" y="6" width="1" height="1" fill="#301800"/></g></svg><div class="t" style="left:107px;top:416px;line-height:13px;font-size:11px">TableDemo.java</div><div class="a" style="left:269px;top:141px;width:16px;height:289px;background-color:#ece9e4;background-image:repeating-conic-gradient(#fff 0 25%, #d4d0c8 0 50%);background-size:2px 2px;"></div><div class="a" style="left:269px;top:141px;width:16px;height:16px;background:#d4d0c8;border-top:1px solid #d4d0c8;border-left:1px solid #d4d0c8;border-right:1px solid #404040;border-bottom:1px solid #404040;box-sizing:border-box;box-shadow:inset -1px -1px 0 #808080, inset 1px 1px 0 #fff;"></div><svg class="a" style="left:269px;top:141px;" width="16" height="16" viewBox="0 0 16 16"><path d="M4.0 10.0 H12.0 L8.0 6.0 Z" fill="#000"/></svg><div class="a" style="left:269px;top:200px;width:16px;height:81px;background:#d4d0c8;border-top:1px solid #d4d0c8;border-left:1px solid #d4d0c8;border-right:1px solid #404040;border-bottom:1px solid #404040;box-sizing:border-box;box-shadow:inset -1px -1px 0 #808080, inset 1px 1px 0 #fff;"></div><div class="a" style="left:269px;top:414px;width:16px;height:16px;background:#d4d0c8;border-top:1px solid #d4d0c8;border-left:1px solid #d4d0c8;border-right:1px solid #404040;border-bottom:1px solid #404040;box-sizing:border-box;box-shadow:inset -1px -1px 0 #808080, inset 1px 1px 0 #fff;"></div><svg class="a" style="left:269px;top:414px;" width="16" height="16" viewBox="0 0 16 16"><path d="M4.0 6.0 H12.0 L8.0 10.0 Z" fill="#000"/></svg><div class="a" style="left:5px;top:437px;width:283px;height:257px;border:1px solid #8c8a87;border-top-left-radius:5px;border-top-right-radius:6px;box-sizing:border-box;"></div><svg class="a" style="left:6px;top:437px;" width="130" height="24" viewBox="0 0 130 24"><path d="M0 24 V5 L4.5 0.5 H93 C 109 0.5, 112 22.5, 127 22.5 H130 V24 Z" fill="url(#tg)"/><path d="M93 0.5 C 109 0.5, 112 22.5, 127 22.5 H130" fill="none" stroke="#8c8a87"/></svg><div class="a" style="left:10px;top:437px;width:91px;height:1px;background:#8c8a87"></div><div class="a" style="left:131px;top:460px;width:156px;height:1px;background:#8c8a87"></div><div class="a" style="left:164px;top:438px;width:1px;height:22px;background:#8c8a87"></div><div class="a" style="left:221px;top:438px;width:1px;height:22px;background:#8c8a87"></div><svg class="a" style="left:10px;top:441px;" width="15" height="15" viewBox="0 0 15 15"><path d="M3 3 L9 9 M3 3 L11 4" stroke="#506070"/><circle cx="3.5" cy="3.5" r="2.8" fill="#c0b050" stroke="#606020"/><circle cx="11" cy="5" r="2.5" fill="#c0b050" stroke="#606020"/><circle cx="9.5" cy="11" r="3.3" fill="#c0b050" stroke="#606020"/></svg><div class="t" style="left:28px;top:443px;line-height:13px;font-size:10.5px">Java Beans</div><svg class="a" style="left:92px;top:443px;" width="12" height="11" viewBox="0 0 12 11"><path d="M1 2 L3 0.5 L6 3.5 L9 0.5 L11 2 L8 5.5 L11 9 L9 10.5 L6 7.5 L3 10.5 L1 9 L4 5.5 Z" fill="#fff" stroke="#505050"/></svg><div class="t" style="left:126px;top:443px;line-height:13px;font-size:11px">Outline</div><div class="t" style="left:168px;top:443px;line-height:13px;font-size:11px">Properties</div><div class="a" style="left:253px;top:442px;width:10px;height:4px;border:1px solid #303030;background:#fff;box-sizing:border-box;"></div><div class="a" style="left:271px;top:442px;width:10px;height:10px;border:1px solid #303030;border-top-width:2px;background:#fff;box-sizing:border-box;"></div><div class="a" style="left:194px;top:462px;width:23px;height:23px;border:1px solid;border-color:#808080 #fff #fff #808080;box-sizing:border-box;background-color:#ece9e4;background-image:repeating-conic-gradient(#fff 0 25%, #d4d0c8 0 50%);background-size:2px 2px;"></div><svg class="a" style="left:198px;top:466px;" width="16" height="16" viewBox="0 0 16 16"><path d="M0.5 4 L5 0.5 V2.5 H12 V5.5 H5 V7.5 Z" fill="#f8d878" stroke="#b08020"/><path d="M15.5 12 L11 8.5 V10.5 H4 V13.5 H11 V15.5 Z" fill="#f8d878" stroke="#b08020"/></svg><svg class="a" style="left:224px;top:467px;" width="15" height="15" viewBox="0 0 15 15"><rect x="0.5" y="0.5" width="10" height="10" fill="#eef4fb" stroke="#7a9cc8"/><rect x="3.5" y="3.5" width="10" height="10" fill="#f4f8fd" stroke="#6a8cc0"/><path d="M5 9 H12" stroke="#2050a0" stroke-width="1.6"/></svg><svg class="a" style="left:245px;top:465px;" width="18" height="18" viewBox="0 0 18 18"><path d="M1 8 L14 2 L17 14 L6 17 Z" fill="#eeeed8" stroke="#d0d0b8"/><rect x="2" y="8" width="10" height="9" fill="#e8e8e0" stroke="#a8a8a0"/><path d="M2 11 H12 M2 14 H12 M6 8 V17" stroke="#a8a8a0"/><rect x="11.5" y="1.5" width="5" height="5" fill="#f8e060" stroke="#a09020"/></svg><svg class="a" style="left:270px;top:466px;" width="12" height="7" viewBox="0 0 12 7"><path d="M0.5 0.5 H11.5 L6 6 Z" fill="#fff" stroke="#404040"/></svg><div class="a" style="left:8px;top:485px;width:277px;height:206px;background:#fff;border-top:1px solid #8c8a87;box-sizing:border-box"></div><div class="a" style="left:15px;top:490px;width:9px;height:9px;background:#fff;border:1px solid #909090;box-sizing:border-box"></div><svg class="a" style="left:15px;top:490px;" width="9" height="9" viewBox="0 0 9 9"><path d="M2 4.5 H7" stroke="#000"/></svg><svg class="a" style="left:31px;top:487px;" width="14" height="14" viewBox="0 0 14 14"><rect x="0.5" y="0.5" width="13" height="13" fill="#eef4fc" stroke="#b0a070"/><rect x="1" y="1" width="12" height="2" fill="#5a8ad0"/></svg><div class="t" style="left:50px;top:489px;line-height:13px;font-size:11px">this-"Identificacion"</div><div class="a" style="left:38px;top:500px;width:1px;height:8px;background:repeating-linear-gradient(to bottom,#a0a0a0 0 1px,transparent 1px 2px)"></div><div class="a" style="left:34px;top:507px;width:9px;height:9px;background:#fff;border:1px solid #909090;box-sizing:border-box"></div><svg class="a" style="left:34px;top:507px;" width="9" height="9" viewBox="0 0 9 9"><path d="M2 4.5 H7" stroke="#000"/></svg><div class="a" style="left:44px;top:511px;width:6px;height:1px;background:repeating-linear-gradient(to right,#a0a0a0 0 1px,transparent 1px 2px)"></div><svg class="a" style="left:51px;top:504px;" width="14" height="14" viewBox="0 0 14 14"><rect x="0.5" y="0.5" width="13" height="13" fill="#eef4fc" stroke="#7890b0"/></svg><div class="t" style="left:69px;top:506px;line-height:13px;font-size:11px">jContentPane</div><div class="a" style="left:57px;top:517px;width:1px;height:83px;background:repeating-linear-gradient(to bottom,#a0a0a0 0 1px,transparent 1px 2px)"></div><div class="a" style="left:58px;top:528px;width:10px;height:1px;background:repeating-linear-gradient(to right,#a0a0a0 0 1px,transparent 1px 2px)"></div><svg class="a" style="left:68px;top:521px;" width="16" height="15" viewBox="0 0 16 15"><rect x="2.5" y="3.5" width="13" height="8" fill="#eef4fc" stroke="#7890b0"/><path d="M1 2 H5 M3 2 V13 M1 13 H5" stroke="#2050b0"/></svg><div class="t" style="left:88px;top:523px;line-height:13px;font-size:11px">loginField</div><div class="a" style="left:58px;top:545px;width:10px;height:1px;background:repeating-linear-gradient(to right,#a0a0a0 0 1px,transparent 1px 2px)"></div><svg class="a" style="left:68px;top:538px;" width="16" height="15" viewBox="0 0 16 15"><path d="M3 1 Q0 3 3 5 Q5 6 3 8" stroke="#806010" fill="none"/><rect x="3.5" y="5.5" width="12" height="8" rx="2" fill="#f8d060" stroke="#906010"/><rect x="7" y="8" width="6" height="3" fill="#fff" stroke="#906010" stroke-width="0.6"/></svg><div class="t" style="left:88px;top:540px;line-height:13px;font-size:11px">loginLabel-"Login"</div><div class="a" style="left:58px;top:562px;width:10px;height:1px;background:repeating-linear-gradient(to right,#a0a0a0 0 1px,transparent 1px 2px)"></div><div class="a" style="left:86px;top:554px;width:76px;height:17px;background:#d4d0c8"></div><svg class="a" style="left:68px;top:555px;" width="16" height="15" viewBox="0 0 16 15"><rect x="2.5" y="3.5" width="13" height="8" fill="#eef4fc" stroke="#7890b0"/><path d="M1 2 H5 M3 2 V13 M1 13 H5" stroke="#2050b0"/></svg><div class="t" style="left:88px;top:557px;line-height:13px;font-size:11px">passwordField</div><div class="a" style="left:58px;top:579px;width:10px;height:1px;background:repeating-linear-gradient(to right,#a0a0a0 0 1px,transparent 1px 2px)"></div><svg class="a" style="left:68px;top:572px;" width="16" height="15" viewBox="0 0 16 15"><path d="M3 1 Q0 3 3 5 Q5 6 3 8" stroke="#806010" fill="none"/><rect x="3.5" y="5.5" width="12" height="8" rx="2" fill="#f8d060" stroke="#906010"/><rect x="7" y="8" width="6" height="3" fill="#fff" stroke="#906010" stroke-width="0.6"/></svg><div class="t" style="left:88px;top:574px;line-height:13px;font-size:11px">passwordLabel-"Password"</div><div class="a" style="left:58px;top:596px;width:10px;height:1px;background:repeating-linear-gradient(to right,#a0a0a0 0 1px,transparent 1px 2px)"></div><svg class="a" style="left:68px;top:589px;" width="16" height="15" viewBox="0 0 16 15"><rect x="0.5" y="3.5" width="14" height="8" fill="#c8d8f0" stroke="#404880"/><rect x="1" y="9" width="13" height="2" fill="#8090c0"/></svg><div class="t" style="left:88px;top:591px;line-height:13px;font-size:11px">buttonOk-"Validate"</div><div class="a" style="left:0px;top:719px;width:1024px;height:1px;background:#fff"></div><div class="a" style="left:7px;top:698px;width:3px;height:18px;background:#fff;border-right:1px solid #808080;border-bottom:1px solid #808080;box-sizing:border-box;"></div><svg class="a" style="left:21px;top:699px;" width="16" height="16" viewBox="0 0 16 16"><rect x="1.5" y="3.5" width="6" height="12" fill="#eaf4fc" stroke="#a0a080"/><rect x="2" y="4" width="5" height="2" fill="#4a80d0"/><path d="M11.5 0 L14.5 3 L11.5 6 L8.5 3 Z" fill="#fff" stroke="#c09020" stroke-width="1.2"/><path d="M11.5 1.5 V4.5 M10 3 H13" stroke="#c09020"/></svg><div class="a" style="left:764px;top:698px;width:3px;height:19px;background:#fff;border-right:1px solid #808080;border-bottom:1px solid #808080;box-sizing:border-box;"></div><div class="a" style="left:421px;top:697px;width:2px;height:21px;border-left:1px solid #808080;border-right:1px solid #fff;box-sizing:border-box"></div><div class="a" style="left:510px;top:697px;width:2px;height:21px;border-left:1px solid #808080;border-right:1px solid #fff;box-sizing:border-box"></div><div class="a" style="left:594px;top:697px;width:2px;height:21px;border-left:1px solid #808080;border-right:1px solid #fff;box-sizing:border-box"></div><div class="a" style="left:678px;top:697px;width:2px;height:21px;border-left:1px solid #808080;border-right:1px solid #fff;box-sizing:border-box"></div><div class="t" style="left:429px;top:701px;line-height:13px;font-size:11px">Writable</div><div class="t" style="left:517px;top:701px;line-height:13px;font-size:11px">Smart Insert</div><div class="t" style="left:602px;top:701px;line-height:13px;font-size:11px">1 : 1</div><div class="t" style="left:685px;top:701px;line-height:13px;font-size:11px">In Sync</div><div class="a" style="left:291px;top:91px;width:728px;height:453px;border:1px solid #8c8a87;border-top-left-radius:5px;border-top-right-radius:6px;box-sizing:border-box;"></div><svg class="a" style="left:292px;top:92px;" width="190" height="24" viewBox="0 0 190 24"><defs><linearGradient id="eg2" x1="0" y1="0" x2="0" y2="1"><stop offset="0" stop-color="#0a246a"/><stop offset="1" stop-color="#a6caf0"/></linearGradient></defs><path d="M0 24 V5 L5 0 H148 C 165 0, 172 23, 190 23 V24 Z" fill="url(#eg2)"/></svg><svg class="a" style="left:293px;top:96px;" width="17" height="16" viewBox="0 0 17 16"><g transform="translate(2,0)"><path d="M3 0.5 H10 L13.5 4 V13.5 H3 Z" fill="#eaf0fa" stroke="#a08848"/><path d="M10 0.5 V4 H13.5" fill="#fff" stroke="#c8b078"/><path d="M8.8 3 V9.5 Q8.8 11.5 6.5 11.5" stroke="#2f60b0" stroke-width="1.3" fill="none"/></g><g transform="translate(2,7)"><path d="M4 0.8 L7.6 7.6 H0.4 Z" fill="#f8c850" stroke="#c88a20" stroke-width="1.2" stroke-linejoin="round"/><rect x="3.5" y="3" width="1" height="2.5" fill="#301800"/><rect x="3.5" y="6" width="1" height="1" fill="#301800"/></g></svg><div class="t" style="left:314px;top:98px;line-height:13px;color:#fff;font-size:10.8px">oneSimpleWindow.java</div><svg class="a" style="left:433px;top:97px;" width="11" height="11" viewBox="0 0 11 11"><path d="M1.5 1.5 L9.5 9.5 M9.5 1.5 L1.5 9.5" stroke="#fff" stroke-width="2.4"/></svg><div class="a" style="left:482px;top:114px;width:536px;height:1px;background:#8c8a87"></div><div class="a" style="left:984px;top:96px;width:10px;height:4px;border:1px solid #303030;background:#fff;box-sizing:border-box;"></div><div class="a" style="left:1002px;top:96px;width:10px;height:10px;border:1px solid #303030;border-top-width:2px;background:#fff;box-sizing:border-box;"></div><div class="a" style="left:292px;top:115px;width:726px;height:428px;border:2px solid #a6caf0;border-top-width:2px;box-sizing:border-box"></div><div class="a" style="left:294px;top:117px;width:583px;height:215px;background:#fff"></div><div class="a" style="left:304px;top:127px;width:257px;height:133px;background:#d4d0c8;border-top:1px solid #d4d0c8;border-left:1px solid #d4d0c8;border-right:1px solid #404040;border-bottom:1px solid #404040;box-sizing:border-box;box-shadow:inset 1px 1px 0 #fff, inset -1px -1px 0 #808080"></div><div class="a" style="left:307px;top:130px;width:250px;height:19px;background:linear-gradient(to right,#0a246a,#a6caf0)"></div><svg class="a" style="left:309px;top:131px;" width="17" height="17" viewBox="0 0 17 17"><path d="M9 1 Q6 4 9 6 Q11 8 8 10" stroke="#e04020" stroke-width="1.5" fill="none"/><path d="M12 3 Q10 6 12 8" stroke="#e04020" stroke-width="1.2" fill="none"/><ellipse cx="8.5" cy="11" rx="6" ry="2" fill="none" stroke="#c0d0ff" stroke-width="1.2"/><path d="M3 13 Q8.5 16 14 13" stroke="#c0d0ff" stroke-width="1.3" fill="none"/><path d="M1 15 H16" stroke="#8090ff"/></svg><div class="t" style="left:327px;top:133px;line-height:15px;color:#fff;font-weight:bold;font-size:11.8px">Identificacion</div><div class="a" style="left:505px;top:133px;width:16px;height:14px;background:#d4d0c8;border-top:1px solid #fff;border-left:1px solid #fff;border-right:1px solid #404040;border-bottom:1px solid #404040;box-sizing:border-box;box-shadow:inset -1px -1px 0 #808080"></div><svg class="a" style="left:505px;top:133px;" width="16" height="14" viewBox="0 0 16 14"><rect x="4" y="9" width="6" height="2" fill="#000"/></svg><div class="a" style="left:521px;top:133px;width:16px;height:14px;background:#d4d0c8;border-top:1px solid #fff;border-left:1px solid #fff;border-right:1px solid #404040;border-bottom:1px solid #404040;box-sizing:border-box;box-shadow:inset -1px -1px 0 #808080"></div><svg class="a" style="left:521px;top:133px;" width="16" height="14" viewBox="0 0 16 14"><rect x="3.5" y="2.5" width="8" height="7" fill="none" stroke="#000"/><rect x="3" y="2" width="9" height="2" fill="#000"/></svg><div class="a" style="left:539px;top:133px;width:16px;height:14px;background:#d4d0c8;border-top:1px solid #fff;border-left:1px solid #fff;border-right:1px solid #404040;border-bottom:1px solid #404040;box-sizing:border-box;box-shadow:inset -1px -1px 0 #808080"></div><svg class="a" style="left:539px;top:133px;" width="16" height="14" viewBox="0 0 16 14"><path d="M4.5 3.5 L10.5 9.5 M10.5 3.5 L4.5 9.5" stroke="#000" stroke-width="1.6"/></svg><div class="a" style="left:307px;top:149px;width:250px;height:109px;background:#e6e0dc"></div><div class="a" style="left:382px;top:167px;width:26px;height:15px;background:#dcd8d4;border:1px solid #c8c4c0;box-sizing:border-box"></div><div class="t" style="left:382px;top:169px;line-height:13px;font-size:11px">Login</div><div class="a" style="left:358px;top:186px;width:50px;height:15px;background:#dcd8d4;border:1px solid #c8c4c0;box-sizing:border-box"></div><div class="t" style="left:358px;top:188px;line-height:13px;font-size:11px">Password</div><div class="a" style="left:418px;top:165px;width:106px;height:20px;background:#f6f6f6;border-top:1px solid #606060;border-left:1px solid #606060;border-right:1px solid #808080;box-sizing:border-box"></div><div class="a" style="left:418px;top:185px;width:106px;height:18px;background:#f6f6f6"></div><div class="a" style="left:418px;top:183px;width:107px;height:2px;background:#000"></div><div class="a" style="left:418px;top:202px;width:107px;height:2px;background:#000"></div><div class="a" style="left:418px;top:183px;width:1px;height:21px;background:#000"></div><div class="a" style="left:523px;top:183px;width:2px;height:21px;background:#000"></div><div class="a" style="left:308px;top:165px;width:250px;height:1px;background:repeating-linear-gradient(to right,#f01010 0 3px,transparent 3px 6px)"></div><div class="a" style="left:308px;top:184px;width:250px;height:1px;background:repeating-linear-gradient(to right,#f01010 0 3px,transparent 3px 6px)"></div><div class="a" style="left:308px;top:203px;width:250px;height:1px;background:repeating-linear-gradient(to right,#f01010 0 3px,transparent 3px 6px)"></div><div class="a" style="left:308px;top:241px;width:250px;height:1px;background:repeating-linear-gradient(to right,#f01010 0 3px,transparent 3px 6px)"></div><div class="a" style="left:308px;top:149px;width:1px;height:110px;background:repeating-linear-gradient(to bottom,#f01010 0 3px,transparent 3px 6px)"></div><div class="a" style="left:418px;top:149px;width:1px;height:110px;background:repeating-linear-gradient(to bottom,#f01010 0 3px,transparent 3px 6px)"></div><div class="a" style="left:556px;top:149px;width:1px;height:110px;background:repeating-linear-gradient(to bottom,#f01010 0 3px,transparent 3px 6px)"></div><div class="a" style="left:416px;top:182px;width:5px;height:5px;background:#000;border:1px solid #fff;box-sizing:border-box"></div><div class="a" style="left:522px;top:182px;width:5px;height:5px;background:#000;border:1px solid #fff;box-sizing:border-box"></div><div class="a" style="left:416px;top:201px;width:5px;height:5px;background:#000;border:1px solid #fff;box-sizing:border-box"></div><div class="a" style="left:522px;top:201px;width:5px;height:5px;background:#000;border:1px solid #fff;box-sizing:border-box"></div><div class="a" style="left:522px;top:190px;width:6px;height:6px;background:#70e860;border:1px solid #404040;box-sizing:border-box"></div><div class="a" style="left:468px;top:200px;width:6px;height:6px;background:#70e860;border:1px solid #404040;box-sizing:border-box"></div><div class="a" style="left:359px;top:148px;width:12px;height:15px;background:#00f0f0;border:1px solid #000;border-radius:3px;box-sizing:border-box"></div><div class="t" style="left:359px;top:149px;line-height:15px;font-size:10.5px;width:12px;text-align:center">0</div><div class="a" style="left:483px;top:148px;width:12px;height:15px;background:#00f0f0;border:1px solid #000;border-radius:3px;box-sizing:border-box"></div><div class="t" style="left:483px;top:149px;line-height:15px;font-size:10.5px;width:12px;text-align:center">1</div><div class="a" style="left:294px;top:169px;width:12px;height:14px;background:#00f0f0;border:1px solid #000;border-radius:3px;box-sizing:border-box"></div><div class="t" style="left:294px;top:170px;line-height:14px;font-size:10.5px;width:12px;text-align:center">0</div><div class="a" style="left:294px;top:187px;width:12px;height:15px;background:#00f0f0;border:1px solid #000;border-radius:3px;box-sizing:border-box"></div><div class="t" style="left:294px;top:188px;line-height:15px;font-size:10.5px;width:12px;text-align:center">1</div><div class="a" style="left:294px;top:216px;width:12px;height:15px;background:#00f0f0;border:1px solid #000;border-radius:3px;box-sizing:border-box"></div><div class="t" style="left:294px;top:217px;line-height:15px;font-size:10.5px;width:12px;text-align:center">2</div><div class="a" style="left:459px;top:218px;width:56px;height:22px;background:#e6e0dc;border:1px solid #808080;box-sizing:border-box;box-shadow:inset 1px 1px 0 #fff"></div><div class="t" style="left:459px;top:224px;line-height:13px;font-size:11px;width:56px;text-align:center">Validate</div><div class="a" style="left:294px;top:332px;width:583px;height:8px;background:#d4d0c8;border-top:1px solid #808080;border-bottom:1px solid #a8a6a0;box-sizing:border-box"></div><svg class="a" style="left:634px;top:333px;" width="26" height="6" viewBox="0 0 26 6"><path d="M2 5 L6 1 L10 5 Z M16 1 H24 L20 5 Z" fill="#6070a8"/></svg><div class="a" style="left:877px;top:117px;width:14px;height:424px;background:#d4d0c8"></div><svg class="a" style="left:881px;top:120px;" width="5" height="8" viewBox="0 0 5 8"><path d="M0 0 L5 4 L0 8 Z" fill="#0a246a"/></svg><div class="a" style="left:877px;top:134px;width:14px;height:101px;border:1px dotted #000;box-sizing:border-box;border-radius:2px"></div><div class="a" style="left:880px;top:137px;width:2px;height:19px;border-left:1px solid #fff;border-right:1px solid #808080"></div><div class="a" style="left:885px;top:137px;width:2px;height:19px;border-left:1px solid #fff;border-right:1px solid #808080"></div><div class="a" style="left:880px;top:205px;width:2px;height:26px;border-left:1px solid #fff;border-right:1px solid #808080"></div><div class="a" style="left:885px;top:205px;width:2px;height:26px;border-left:1px solid #fff;border-right:1px solid #808080"></div><div class="t" style="left:876px;top:203px;width:46px;height:16px;line-height:16px;font-weight:bold;font-size:12px;letter-spacing:0.8px;transform:rotate(-90deg);transform-origin:0 0;text-align:center">Palette</div><div class="a" style="left:891px;top:117px;width:125px;height:424px;background:#d4d0c8;border-left:1px solid #808080;box-sizing:border-box"></div><div class="a" style="left:1013px;top:117px;width:3px;height:424px;background:#fff"></div><div class="a" style="left:893px;top:119px;width:120px;height:19px;border:1px solid;border-color:#808080 #fff #fff #808080;box-sizing:border-box;background-color:#ece9e4;background-image:repeating-conic-gradient(#fff 0 25%, #d4d0c8 0 50%);background-size:2px 2px;"></div><svg class="a" style="left:897px;top:120px;" width="12" height="17" viewBox="0 0 12 17"><path d="M1.5 0.5 V13 L4.5 10 L7.5 15.5 L9.5 14.5 L6.5 9 H11 Z" fill="#f8f8d0" stroke="#707050"/></svg><div class="t" style="left:913px;top:122px;line-height:13px;font-size:11px">Selection</div><svg class="a" style="left:895px;top:138px;" width="16" height="16" viewBox="0 0 16 16"><rect x="1.5" y="1.5" width="12" height="11" fill="none" stroke="#b08840" stroke-dasharray="2.5 2"/><path d="M1.5 9 V12.5 H8" stroke="#3060b0" stroke-dasharray="2.5 2" fill="none"/><path d="M13 10 V16 M10 13 H16" stroke="#204090" stroke-width="1.4"/></svg><div class="t" style="left:912px;top:140px;line-height:13px;font-size:11px">Marquee</div><svg class="a" style="left:895px;top:157px;" width="16" height="16" viewBox="0 0 16 16"><g stroke="#5a9a20" stroke-width="1"><ellipse cx="5.5" cy="10.5" rx="4.6" ry="4.4" fill="#b09850"/><circle cx="8.5" cy="3.5" r="3" fill="#b09850"/><circle cx="13" cy="8" r="2.9" fill="#b09850"/></g><path d="M2.5 8 L8.5 13 M7 2 L10 5 M11.5 6.5 L14.5 9.5" stroke="#f0e070" stroke-width="1.1"/></svg><div class="t" style="left:912px;top:159px;line-height:13px;font-size:11px">Choose Bean</div><div class="a" style="left:891px;top:177px;width:125px;height:1px;background:#808080"></div><div class="a" style="left:891px;top:178px;width:125px;height:20px;background:linear-gradient(to right,#b8b4ac,#dcd8d0 40%,#d4d0c8);border-top:1px solid #fff;border-left:1px solid #fff;border-bottom:1px solid #808080;border-right:1px solid #808080;box-sizing:border-box"></div><svg class="a" style="left:894px;top:179px;" width="18" height="17" viewBox="0 0 18 17"><path d="M4 1 V8 Q4 10 1 9" stroke="#3060c0" stroke-width="1.8" fill="none"/><path d="M6.5 9.5 H11 M6.5 12 H11 M6.5 14.5 H11" stroke="#98a8c8" stroke-dasharray="1.5 1"/><ellipse cx="13.5" cy="12" rx="3.2" ry="4.2" transform="rotate(-35 13.5 12)" fill="#b09850" stroke="#5a9a20"/><path d="M11 9.5 L16 14.5" stroke="#f0e070"/></svg><div class="t" style="left:911px;top:182px;line-height:13px;font-size:11px">Swing Compon...</div><svg class="a" style="left:1003px;top:182px;" width="10" height="10" viewBox="0 0 10 10"><path d="M0.5 9.5 L4 6" stroke="#606040"/><path d="M2.5 4.5 L5.5 7.5 L6.5 6 L4 3.5 Z" fill="#2040a0"/><path d="M4.5 3 L7 0.8 L9.2 3 L7 5.5 Z" fill="#3050b0" stroke="#203080" stroke-width="0.6"/></svg><svg class="a" style="left:894px;top:200px;" width="16" height="16" viewBox="0 0 16 16"><rect x="0.5" y="3.5" width="14" height="8" fill="#c8d8f0" stroke="#404880"/><rect x="1" y="9" width="13" height="2" fill="#8090c0"/></svg><div class="t" style="left:912px;top:202px;line-height:13px;font-size:11px">JButton</div><svg class="a" style="left:894px;top:219px;" width="16" height="16" viewBox="0 0 16 16"><rect x="1.5" y="1.5" width="12" height="12" fill="#fff" stroke="#7890b0"/><path d="M4 7 L6.5 10 L11 4" stroke="#203070" stroke-width="1.8" fill="none"/></svg><div class="t" style="left:912px;top:221px;line-height:13px;font-size:11px">JCheckBox</div><svg class="a" style="left:894px;top:238px;" width="16" height="16" viewBox="0 0 16 16"><circle cx="7.5" cy="7.5" r="6" fill="#fff" stroke="#60a060"/><circle cx="7.5" cy="7.5" r="2.5" fill="#102010"/></svg><div class="t" style="left:912px;top:240px;line-height:13px;font-size:11px">JRadioButton</div><svg class="a" style="left:894px;top:257px;" width="16" height="16" viewBox="0 0 16 16"><rect x="1.5" y="1.5" width="12" height="13" fill="#eef2fa" stroke="#7890b0"/><rect x="2" y="2" width="5" height="12" fill="#8090c0"/></svg><div class="t" style="left:912px;top:259px;line-height:13px;font-size:11px">JToggleButton</div><svg class="a" style="left:894px;top:276px;" width="16" height="16" viewBox="0 0 16 16"><path d="M3 1 Q0 3 3 5 Q5 6 3 8" stroke="#806010" fill="none"/><rect x="3.5" y="5.5" width="12" height="8" rx="2" fill="#f8d060" stroke="#906010"/><rect x="7" y="8" width="6" height="3" fill="#fff" stroke="#906010" stroke-width="0.6"/></svg><div class="t" style="left:912px;top:278px;line-height:13px;font-size:11px">JLabel</div><div class="a" style="left:893px;top:294px;width:120px;height:19px;border:1px solid;border-color:#808080 #fff #fff #808080;box-sizing:border-box;background:#d4d0c8"></div><svg class="a" style="left:894px;top:295px;" width="16" height="16" viewBox="0 0 16 16"><rect x="2.5" y="3.5" width="13" height="8" fill="#eef4fc" stroke="#7890b0"/><path d="M1 2 H5 M3 2 V13 M1 13 H5" stroke="#2050b0"/></svg><div class="t" style="left:912px;top:297px;line-height:13px;font-size:11px">JTextField</div><svg class="a" style="left:894px;top:314px;" width="16" height="16" viewBox="0 0 16 16"><rect x="2.5" y="1.5" width="13" height="8" fill="#eef4fc" stroke="#7890b0"/><circle cx="4" cy="11" r="2.5" fill="#f0c040" stroke="#a07010"/><path d="M6 11 H14 M12 11 V13" stroke="#a07010" stroke-width="1.5"/></svg><div class="t" style="left:912px;top:316px;line-height:13px;font-size:11px">JPasswordField</div><svg class="a" style="left:894px;top:332px;" width="16" height="16" viewBox="0 0 16 16"><rect x="1.5" y="0.5" width="13" height="14" fill="#eef4fc" stroke="#7890b0"/><path d="M3 3 H5 M4 3 V9 M3 9 H5 M8 4 H13 M8 7 H13" stroke="#2050b0"/><rect x="2" y="11" width="12" height="3" fill="#b0c0e0"/></svg><div class="t" style="left:912px;top:334px;line-height:13px;font-size:11px">JTextArea</div><svg class="a" style="left:894px;top:352px;" width="16" height="16" viewBox="0 0 16 16"><path d="M0 7.5 H16" stroke="#7890b0" stroke-width="2"/><path d="M4 2 H11 V10 L7.5 13 L4 10 Z" fill="#eef4fc" stroke="#5060a0"/></svg><div class="t" style="left:912px;top:354px;line-height:13px;font-size:11px">JSlider</div><svg class="a" style="left:894px;top:370px;" width="16" height="16" viewBox="0 0 16 16"><rect x="0.5" y="2.5" width="15" height="10" fill="#eef4fc" stroke="#7890b0"/><rect x="1" y="3" width="5" height="9" fill="#c0cce8" stroke="#405090" stroke-width="0.6"/><path d="M10 4 V11 M13 4 V11" stroke="#405090"/></svg><div class="t" style="left:912px;top:372px;line-height:13px;font-size:11px">JScrollBar</div><svg class="a" style="left:894px;top:390px;" width="16" height="16" viewBox="0 0 16 16"><rect x="1.5" y="0.5" width="13" height="15" fill="#eef4fc" stroke="#7890b0"/><path d="M4 4 H12 M4 7 H12 M4 10 H12 M4 13 H12" stroke="#5070b0" stroke-dasharray="1 1"/></svg><div class="t" style="left:912px;top:392px;line-height:13px;font-size:11px">JList</div><svg class="a" style="left:894px;top:408px;" width="16" height="16" viewBox="0 0 16 16"><rect x="1.5" y="3.5" width="13" height="12" fill="#eef4fc" stroke="#7890b0"/><rect x="3" y="0.5" width="6" height="4" fill="#eef4fc" stroke="#7890b0"/><path d="M4 8 H12 M4 11 H12" stroke="#5070b0"/></svg><div class="t" style="left:912px;top:410px;line-height:13px;font-size:11px">JComboBox</div><svg class="a" style="left:894px;top:428px;" width="16" height="16" viewBox="0 0 16 16"><rect x="1.5" y="0.5" width="13" height="15" fill="#eef4fc" stroke="#7890b0"/><path d="M5 3 V12 H10 M5 7 H10" stroke="#405090" fill="none"/><rect x="9" y="5" width="3" height="3" fill="#fff" stroke="#405090" stroke-width="0.8"/><rect x="9" y="10" width="3" height="3" fill="#fff" stroke="#405090" stroke-width="0.8"/></svg><div class="t" style="left:912px;top:430px;line-height:13px;font-size:11px">JTree</div><svg class="a" style="left:894px;top:446px;" width="16" height="16" viewBox="0 0 16 16"><rect x="1.5" y="0.5" width="13" height="15" fill="#fff" stroke="#c09040"/><rect x="2" y="1" width="12" height="3" fill="#f0a040"/><path d="M2 7 H14 M2 10 H14 M2 13 H14 M7 1 V15" stroke="#6080b0"/></svg><div class="t" style="left:912px;top:448px;line-height:13px;font-size:11px">JTable on</div><div class="t" style="left:912px;top:461px;line-height:13px;font-size:11px;color:#606060;clip-path:inset(0 0 4px 0)">JScrollPane</div><svg class="a" style="left:946px;top:471px;" width="12" height="6" viewBox="0 0 12 6"><path d="M0 0 H12 L6 6 Z" fill="#000"/></svg><div class="a" style="left:891px;top:481px;width:125px;height:20px;background:linear-gradient(to right,#b8b4ac,#dcd8d0 40%,#d4d0c8);border-top:1px solid #fff;border-left:1px solid #fff;border-bottom:1px solid #808080;border-right:1px solid #808080;box-sizing:border-box"></div><svg class="a" style="left:894px;top:483px;" width="18" height="17" viewBox="0 0 18 17"><rect x="1.5" y="6.5" width="8" height="9" fill="#dde8f8" stroke="#7890b0"/><path d="M5 0 V6 Q5 8 2 7" stroke="#3060c0" stroke-width="1.8" fill="none"/><ellipse cx="13.5" cy="12" rx="3.2" ry="4.2" transform="rotate(-35 13.5 12)" fill="#b09850" stroke="#5a9a20"/><path d="M11 9.5 L16 14.5" stroke="#f0e070"/></svg><div class="t" style="left:911px;top:485px;line-height:13px;font-size:11px">Swing Containers</div><div class="a" style="left:891px;top:501px;width:125px;height:20px;background:linear-gradient(to right,#b8b4ac,#dcd8d0 40%,#d4d0c8);border-top:1px solid #fff;border-left:1px solid #fff;border-bottom:1px solid #808080;border-right:1px solid #808080;box-sizing:border-box"></div><svg class="a" style="left:894px;top:503px;" width="18" height="17" viewBox="0 0 18 17"><rect x="1.5" y="6.5" width="8" height="9" fill="#dde8f8" stroke="#7890b0"/><path d="M5 0 V6 Q5 8 2 7" stroke="#3060c0" stroke-width="1.8" fill="none"/><ellipse cx="13.5" cy="12" rx="3.2" ry="4.2" transform="rotate(-35 13.5 12)" fill="#b09850" stroke="#5a9a20"/><path d="M11 9.5 L16 14.5" stroke="#f0e070"/></svg><div class="t" style="left:911px;top:505px;line-height:13px;font-size:11px">Swing Menus</div><div class="a" style="left:891px;top:521px;width:125px;height:20px;background:linear-gradient(to right,#b8b4ac,#dcd8d0 40%,#d4d0c8);border-top:1px solid #fff;border-left:1px solid #fff;border-bottom:1px solid #808080;border-right:1px solid #808080;box-sizing:border-box"></div><svg class="a" style="left:894px;top:523px;" width="18" height="17" viewBox="0 0 18 17"><text x="0" y="6" font-family="Liberation Sans" font-size="6" fill="#3050a0" font-weight="bold">AWT</text><path d="M5 9 H9 M5 11 H9 M5 13 H9" stroke="#a0b0c8" stroke-dasharray="1 1"/><ellipse cx="13.5" cy="12" rx="3.2" ry="4.2" transform="rotate(-35 13.5 12)" fill="#b09850" stroke="#5a9a20"/><path d="M11 9.5 L16 14.5" stroke="#f0e070"/></svg><div class="t" style="left:911px;top:525px;line-height:13px;font-size:11px">AWT Controls</div><div class="a" style="left:294px;top:340px;width:12px;height:201px;background:#d4d0c8"></div><div class="a" style="left:306px;top:340px;width:34px;height:185px;background:#fff"></div><div class="a" style="left:339px;top:340px;width:1px;height:185px;background:#d0ccc4"></div><div class="a" style="left:340px;top:340px;width:537px;height:185px;background:#fff"></div><div class="a" style="left:340px;top:340px;width:537px;height:17px;background:#e8f2fe"></div><div class="a" style="left:294px;top:340px;width:12px;height:17px;background-color:#0a246a;background-image:repeating-conic-gradient(#0a246a 0 25%, #fff 0 50%);background-size:2px 2px"></div><svg class="a" style="left:294px;top:341px;" width="12" height="15" viewBox="0 0 12 15"><path d="M6 1 C 3 1, 3 5, 2.5 8 C 1 10, 1 13, 3 13.5 H9 C 11 13, 11 10, 9.5 8 C 9 5, 9 1, 6 1 Z" fill="#f8c850" stroke="#c08020"/><rect x="5.3" y="5" width="1.6" height="4" fill="#402000"/><rect x="5.3" y="10" width="1.6" height="1.6" fill="#402000"/></svg><div class="t" style="left:306px;top:342px;width:23px;text-align:right;line-height:17px;font-family:'Liberation Mono',monospace;font-size:13.333px;color:#787878">1</div><div class="t" style="left:340px;top:342px;line-height:17px;font-family:'Liberation Mono',monospace;font-size:13.333px;color:#000;clip-path:inset(0 0 0 0)"><span style="color:#7f0055;font-weight:bold">import</span> javax.swing.SwingUtilities;</div><div class="t" style="left:306px;top:359px;width:23px;text-align:right;line-height:17px;font-family:'Liberation Mono',monospace;font-size:13.333px;color:#787878">21</div><div class="t" style="left:306px;top:376px;width:23px;text-align:right;line-height:17px;font-family:'Liberation Mono',monospace;font-size:13.333px;color:#787878">22</div><div class="t" style="left:340px;top:376px;line-height:17px;font-family:'Liberation Mono',monospace;font-size:13.333px;color:#000;clip-path:inset(0 0 0 0)"><span style="color:#7f0055;font-weight:bold">public class</span> oneSimpleWindow <span style="color:#7f0055;font-weight:bold">extends</span> JFrame {</div><div class="t" style="left:306px;top:393px;width:23px;text-align:right;line-height:17px;font-family:'Liberation Mono',monospace;font-size:13.333px;color:#787878">23</div><div class="t" style="left:306px;top:410px;width:23px;text-align:right;line-height:17px;font-family:'Liberation Mono',monospace;font-size:13.333px;color:#787878">24</div><div class="t" style="left:340px;top:410px;line-height:17px;font-family:'Liberation Mono',monospace;font-size:13.333px;color:#000;clip-path:inset(0 0 0 0)">    <span style="color:#7f0055;font-weight:bold">private static final long</span> <span style="color:#0000c0;font-style:italic">serialVersionUID</span> = 1L;</div><div class="t" style="left:306px;top:427px;width:23px;text-align:right;line-height:17px;font-family:'Liberation Mono',monospace;font-size:13.333px;color:#787878">25</div><div class="t" style="left:306px;top:444px;width:23px;text-align:right;line-height:17px;font-family:'Liberation Mono',monospace;font-size:13.333px;color:#787878">26</div><div class="t" style="left:340px;top:444px;line-height:17px;font-family:'Liberation Mono',monospace;font-size:13.333px;color:#000;clip-path:inset(0 0 0 0)">    <span style="color:#7f0055;font-weight:bold">private</span> JPanel <span style="color:#0000c0">jContentPane</span> = <span style="color:#7f0055;font-weight:bold">null</span>;</div><div class="t" style="left:306px;top:461px;width:23px;text-align:right;line-height:17px;font-family:'Liberation Mono',monospace;font-size:13.333px;color:#787878">27</div><div class="t" style="left:306px;top:478px;width:23px;text-align:right;line-height:17px;font-family:'Liberation Mono',monospace;font-size:13.333px;color:#787878">28</div><div class="t" style="left:340px;top:478px;line-height:17px;font-family:'Liberation Mono',monospace;font-size:13.333px;color:#000;clip-path:inset(0 0 0 0)">    <span style="color:#7f0055;font-weight:bold">private</span> JTextField <span style="color:#0000c0">loginField</span> = <span style="color:#7f0055;font-weight:bold">null</span>;</div><div class="t" style="left:306px;top:495px;width:23px;text-align:right;line-height:17px;font-family:'Liberation Mono',monospace;font-size:13.333px;color:#787878">29</div><div class="t" style="left:306px;top:512px;width:23px;text-align:right;line-height:17px;font-family:'Liberation Mono',monospace;font-size:13.333px;color:#787878">30</div><div class="t" style="left:340px;top:512px;line-height:17px;font-family:'Liberation Mono',monospace;font-size:13.333px;color:#000;clip-path:inset(0 0 0 0)">    <span style="color:#7f0055;font-weight:bold">private</span> JLabel <span style="color:#0000c0">loginLabel</span> = <span style="color:#7f0055;font-weight:bold">null</span>;</div><svg class="a" style="left:329px;top:342px;" width="10" height="10" viewBox="0 0 10 10"><circle cx="5" cy="5" r="4.5" fill="#fff" stroke="#8090b0"/><path d="M2.5 5 H7.5 M5 2.5 V7.5" stroke="#204020" stroke-width="1.2"/></svg><div class="a" style="left:612px;top:344px;width:9px;height:11px;border:1px solid #909090;background:#fff;box-sizing:border-box"></div><svg class="a" style="left:612px;top:344px;" width="9" height="11" viewBox="0 0 9 11"><path d="M2 8.5 H3 M4 8.5 H5 M6 8.5 H7" stroke="#606060"/></svg><div class="a" style="left:340px;top:525px;width:537px;height:16px;background-color:#ece9e4;background-image:repeating-conic-gradient(#fff 0 25%, #d4d0c8 0 50%);background-size:2px 2px;"></div><div class="a" style="left:340px;top:525px;width:16px;height:16px;background:#d4d0c8;border-top:1px solid #d4d0c8;border-left:1px solid #d4d0c8;border-right:1px solid #404040;border-bottom:1px solid #404040;box-sizing:border-box;box-shadow:inset -1px -1px 0 #808080, inset 1px 1px 0 #fff;"></div><svg class="a" style="left:340px;top:525px;" width="16" height="16" viewBox="0 0 16 16"><path d="M9.5 4.0 V12.0 L5.5 8.0 Z" fill="#808080"/></svg><div class="a" style="left:291px;top:548px;width:728px;height:146px;border:1px solid #8c8a87;border-top-left-radius:5px;border-top-right-radius:6px;box-sizing:border-box;"></div><svg class="a" style="left:292px;top:548px;" width="150" height="23" viewBox="0 0 150 23"><path d="M0 23 V5 L4.5 0.5 H81 C 97 0.5, 100 22.5, 115 22.5 H150 V23 Z" fill="url(#tg)"/><path d="M81 0.5 C 97 0.5, 100 22.5, 115 22.5 H150" fill="none" stroke="#8c8a87"/></svg><div class="a" style="left:296px;top:548px;width:79px;height:1px;background:#8c8a87"></div><div class="a" style="left:442px;top:570px;width:576px;height:1px;background:#8c8a87"></div><svg class="a" style="left:296px;top:551px;" width="16" height="16" viewBox="0 0 16 16"><rect x="0.5" y="0.5" width="12" height="14" fill="#fff" stroke="#a08848"/><path d="M13 2 Q15 7 13 13" stroke="#8090c0" fill="none"/><circle cx="6.5" cy="4.5" r="3" fill="#e04040"/><path d="M6.5 8 L10 13 H3 Z" fill="#f8b030"/><path d="M0.5 7.5 H12.5" stroke="#a08848"/></svg><div class="t" style="left:314px;top:554px;line-height:13px;font-size:10.5px">Problems</div><svg class="a" style="left:366px;top:554px;" width="12" height="11" viewBox="0 0 12 11"><path d="M1 2 L3 0.5 L6 3.5 L9 0.5 L11 2 L8 5.5 L11 9 L9 10.5 L6 7.5 L3 10.5 L1 9 L4 5.5 Z" fill="#fff" stroke="#505050"/></svg><div class="t" style="left:401px;top:554px;line-height:13px;font-size:11px">Javadoc</div><div class="a" style="left:444px;top:549px;width:1px;height:21px;background:#8c8a87"></div><div class="t" style="left:448px;top:554px;line-height:13px;font-size:11px">Declaration</div><div class="a" style="left:506px;top:549px;width:1px;height:21px;background:#8c8a87"></div><div class="t" style="left:510px;top:554px;line-height:13px;font-size:11.5px;font-weight:bold">Console</div><div class="a" style="left:557px;top:549px;width:1px;height:21px;background:#8c8a87"></div><div class="t" style="left:562px;top:554px;line-height:13px;font-size:11px">Results</div><div class="a" style="left:602px;top:549px;width:1px;height:21px;background:#8c8a87"></div><svg class="a" style="left:942px;top:551px;" width="16" height="16" viewBox="0 0 16 16"><path d="M1 3.5 H6 M4 1.5 L6 3.5 L4 5.5 M7.5 1 V6" stroke="#5070a0" stroke-width="1.1" fill="none"/><path d="M1 13.5 H6 M4 11.5 L6 13.5 L4 15.5 M7.5 11 V16" stroke="#5070a0" stroke-width="1.1" fill="none"/><path d="M5.5 6.5 H10 V4 L15 8.5 L10 13 V10.5 H5.5 Z" fill="#f8d070" stroke="#b08020"/></svg><svg class="a" style="left:965px;top:552px;" width="12" height="7" viewBox="0 0 12 7"><path d="M0.5 0.5 H11.5 L6 6 Z" fill="#fff" stroke="#404040"/></svg><div class="a" style="left:984px;top:552px;width:10px;height:4px;border:1px solid #303030;background:#fff;box-sizing:border-box;"></div><div class="a" style="left:1002px;top:552px;width:10px;height:10px;border:1px solid #303030;border-top-width:2px;background:#fff;box-sizing:border-box;"></div><div class="t" style="left:294px;top:574px;line-height:13px;font-size:11px">0 errors, 147 warnings, 0 infos</div><div class="a" style="left:293px;top:587px;width:707px;height:1px;background:#808080"></div><div class="a" style="left:293px;top:587px;width:1px;height:104px;background:#808080"></div><div class="a" style="left:294px;top:588px;width:706px;height:86px;background:#fff"></div><div class="a" style="left:294px;top:588px;width:706px;height:17px;background:#d4d0c8;border-top:1px solid #fff;border-left:1px solid #fff;border-bottom:1px solid #404040;box-sizing:border-box;box-shadow:inset 0 -1px 0 #808080"></div><div class="t" style="left:299px;top:591px;line-height:13px;font-size:11px">Description</div><svg class="a" style="left:362px;top:593px;" width="9" height="5" viewBox="0 0 9 5"><path d="M0 5 L4.5 0 L9 5 Z" fill="#a0a0a0"/></svg><div class="a" style="left:294px;top:621px;width:706px;height:1px;background:#d4d0c8"></div><div class="a" style="left:294px;top:638px;width:706px;height:1px;background:#d4d0c8"></div><div class="a" style="left:294px;top:655px;width:706px;height:1px;background:#d4d0c8"></div><div class="a" style="left:301px;top:609px;width:9px;height:9px;background:#fff;border:1px solid #909090;box-sizing:border-box"></div><svg class="a" style="left:301px;top:609px;" width="9" height="9" viewBox="0 0 9 9"><path d="M2 4.5 H7" stroke="#000"/></svg><svg class="a" style="left:318px;top:605px;" width="15" height="15" viewBox="0 0 15 15"><path d="M2.5 2 V13 M2.5 7 H7 M2.5 12 H7" stroke="#5070b0"/><rect x="0.5" y="0.5" width="4" height="3" fill="#fff" stroke="#5070b0"/><path d="M8 3 H14 M8 7 H14 M8 12 H14" stroke="#5070b0" stroke-dasharray="2 1"/></svg><div class="t" style="left:336px;top:608px;line-height:13px;font-size:12px;font-weight:bold">Warnings (100 of 147 items)</div><svg class="a" style="left:337px;top:624px;" width="12" height="12" viewBox="0 0 12 12"><path d="M6 0.8 C 4.5 0.8, 1 8, 0.8 9.5 C 0.8 11, 2 11.5, 3 11.5 H9 C 10 11.5, 11.2 11, 11.2 9.5 C 11 8, 7.5 0.8, 6 0.8 Z" fill="#f8c850" stroke="#c08020"/><rect x="5.3" y="4" width="1.5" height="3.5" fill="#402000"/><rect x="5.3" y="8.5" width="1.5" height="1.5" fill="#402000"/></svg><div class="t" style="left:355px;top:624px;line-height:13px;font-size:10.8px">The field PanelFamilias.infoIsPT is never read locally</div><svg class="a" style="left:337px;top:641px;" width="12" height="12" viewBox="0 0 12 12"><path d="M6 0.8 C 4.5 0.8, 1 8, 0.8 9.5 C 0.8 11, 2 11.5, 3 11.5 H9 C 10 11.5, 11.2 11, 11.2 9.5 C 11 8, 7.5 0.8, 6 0.8 Z" fill="#f8c850" stroke="#c08020"/><rect x="5.3" y="4" width="1.5" height="3.5" fill="#402000"/><rect x="5.3" y="8.5" width="1.5" height="1.5" fill="#402000"/></svg><div class="t" style="left:355px;top:641px;line-height:13px;font-size:10.8px">The field TextFieldDemo.dateFormat is never read locally</div><svg class="a" style="left:337px;top:658px;" width="12" height="12" viewBox="0 0 12 12"><path d="M6 0.8 C 4.5 0.8, 1 8, 0.8 9.5 C 0.8 11, 2 11.5, 3 11.5 H9 C 10 11.5, 11.2 11, 11.2 9.5 C 11 8, 7.5 0.8, 6 0.8 Z" fill="#f8c850" stroke="#c08020"/><rect x="5.3" y="4" width="1.5" height="3.5" fill="#402000"/><rect x="5.3" y="8.5" width="1.5" height="1.5" fill="#402000"/></svg><div class="t" style="left:355px;top:658px;line-height:13px;font-size:10.8px">The field timeCtrl.d is never read locally</div><div class="a" style="left:1000px;top:587px;width:16px;height:88px;background-color:#ece9e4;background-image:repeating-conic-gradient(#fff 0 25%, #d4d0c8 0 50%);background-size:2px 2px;"></div><div class="a" style="left:1000px;top:588px;width:16px;height:16px;background:#d4d0c8;border-top:1px solid #d4d0c8;border-left:1px solid #d4d0c8;border-right:1px solid #404040;border-bottom:1px solid #404040;box-sizing:border-box;box-shadow:inset -1px -1px 0 #808080, inset 1px 1px 0 #fff;"></div><svg class="a" style="left:1000px;top:588px;" width="16" height="16" viewBox="0 0 16 16"><path d="M4.0 10.0 H12.0 L8.0 6.0 Z" fill="#000"/></svg><div class="a" style="left:1000px;top:604px;width:16px;height:9px;background:#d4d0c8;border-top:1px solid #d4d0c8;border-left:1px solid #d4d0c8;border-right:1px solid #404040;border-bottom:1px solid #404040;box-sizing:border-box;box-shadow:inset -1px -1px 0 #808080, inset 1px 1px 0 #fff;"></div><div class="a" style="left:1000px;top:659px;width:16px;height:16px;background:#d4d0c8;border-top:1px solid #d4d0c8;border-left:1px solid #d4d0c8;border-right:1px solid #404040;border-bottom:1px solid #404040;box-sizing:border-box;box-shadow:inset -1px -1px 0 #808080, inset 1px 1px 0 #fff;"></div><svg class="a" style="left:1000px;top:659px;" width="16" height="16" viewBox="0 0 16 16"><path d="M4.0 6.0 H12.0 L8.0 10.0 Z" fill="#000"/></svg><div class="a" style="left:294px;top:674px;width:706px;height:17px;background-color:#ece9e4;background-image:repeating-conic-gradient(#fff 0 25%, #d4d0c8 0 50%);background-size:2px 2px;"></div><div class="a" style="left:294px;top:674px;width:16px;height:17px;background:#d4d0c8;border-top:1px solid #d4d0c8;border-left:1px solid #d4d0c8;border-right:1px solid #404040;border-bottom:1px solid #404040;box-sizing:border-box;box-shadow:inset -1px -1px 0 #808080, inset 1px 1px 0 #fff;"></div><svg class="a" style="left:294px;top:674px;" width="16" height="17" viewBox="0 0 16 17"><path d="M9.5 4.5 V12.5 L5.5 8.5 Z" fill="#000"/></svg><div class="a" style="left:310px;top:674px;width:223px;height:17px;background:#d4d0c8;border-top:1px solid #d4d0c8;border-left:1px solid #d4d0c8;border-right:1px solid #404040;border-bottom:1px solid #404040;box-sizing:border-box;box-shadow:inset -1px -1px 0 #808080, inset 1px 1px 0 #fff;"></div><div class="a" style="left:984px;top:674px;width:16px;height:17px;background:#d4d0c8;border-top:1px solid #d4d0c8;border-left:1px solid #d4d0c8;border-right:1px solid #404040;border-bottom:1px solid #404040;box-sizing:border-box;box-shadow:inset -1px -1px 0 #808080, inset 1px 1px 0 #fff;"></div><svg class="a" style="left:984px;top:674px;" width="16" height="17" viewBox="0 0 16 17"><path d="M6.5 4.5 V12.5 L10.5 8.5 Z" fill="#000"/></svg>
</body></html>
